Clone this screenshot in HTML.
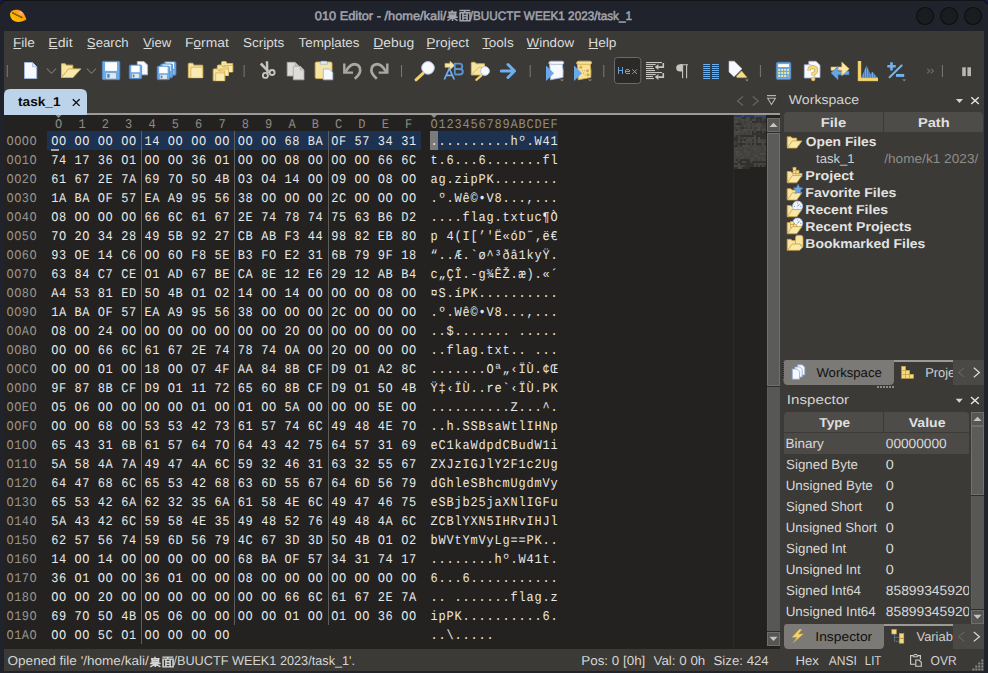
<!DOCTYPE html>
<html><head><meta charset="utf-8"><title>010 Editor</title>
<style>html,body{margin:0;padding:0;background:#20222c;overflow:hidden;width:988px;height:673px;font-family:"Liberation Sans",sans-serif}svg{display:block}</style>
</head><body>
<svg width="988" height="673" viewBox="0 0 988 673" text-rendering="geometricPrecision"><defs><clipPath id="clipP"><rect x="894" y="355" width="59" height="35"/></clipPath><clipPath id="clipI"><rect x="784" y="412" width="185" height="212"/></clipPath><clipPath id="clipV"><rect x="884" y="620" width="69" height="35"/></clipPath></defs><rect x="0" y="0" width="988" height="673" fill="#20222c"/>
<rect x="0" y="0" width="988" height="1" fill="#121317"/>
<path d="M0 0 H4.5 L0 4.5 Z" fill="#1b1a44"/>
<path d="M0.3 4.2 L4.2 0.3" stroke="#111216" stroke-width="1.2"/>
<path d="M988 0 H983.5 L988 4.5 Z" fill="#1b1a44"/>
<path d="M987.7 4.2 L983.8 0.3" stroke="#111216" stroke-width="1.2"/>
<defs><linearGradient id="lem" x1="0" y1="1" x2="1" y2="0"><stop offset="0" stop-color="#ffd000"/><stop offset="0.6" stop-color="#ffa000"/><stop offset="1" stop-color="#ff7a10"/></linearGradient></defs>
<defs><radialGradient id="lemh" cx="0.7" cy="0.25" r="0.5"><stop offset="0" stop-color="#ffc090" stop-opacity="0.9"/><stop offset="1" stop-color="#ff9020" stop-opacity="0"/></radialGradient></defs>
<path d="M10 13.5 C11 9.5 17 8.5 21 11 C24 13 25.5 16.5 26.3 19.5 C22 22.5 15 23 12 19.5 C10.5 17.5 10 15.5 10 13.5Z" fill="url(#lem)"/>
<path d="M10 13.5 C11 9.5 17 8.5 21 11 C24 13 25.5 16.5 26.3 19.5 C22 22.5 15 23 12 19.5 C10.5 17.5 10 15.5 10 13.5Z" fill="url(#lemh)"/>
<path d="M12.2 12.6 L22.3 17.6" stroke="#4a3000" stroke-width="1.6"/>
<path d="M12.8 12.7 L21.5 17.1" stroke="#e0c000" stroke-width="0.5"/>
<text x="314.78" y="19.50" font-family="Liberation Sans" font-size="12.30" fill="#a3a5ad" textLength="131.62" lengthAdjust="spacingAndGlyphs" stroke="#a3a5ad" stroke-width="0.5">010 Editor - /home/kali/</text>
<g transform="translate(446.90 9.90) scale(1.120 1.100)" stroke="#a3a5ad" stroke-width="1.40" fill="none">
<path d="M4.7 0.3 v1.8 M1.2 2.1 h7.6 M2.2 2.1 v3.2 h5.6 v-3.2 M2.2 3.7 h5.6 M0.3 6.6 h9.4 M5 5.3 v4.7 M4.6 7.1 l-4.1 2.6 M5.4 7.1 l4.1 2.6"/>
<path d="M11.2 0.6 h9.6 M15.9 0.6 v1.7 M11.8 2.5 h8.8 v7.3 h-8.8 Z M14.3 2.5 v7.3 M18 2.5 v7.3 M14.3 5 h3.7 M14.3 7.4 h3.7"/>
</g>
<text x="469.80" y="19.50" font-family="Liberation Sans" font-size="12.30" fill="#a3a5ad" textLength="162.19" lengthAdjust="spacingAndGlyphs" stroke="#a3a5ad" stroke-width="0.5">/BUUCTF WEEK1 2023/task_1</text>
<circle cx="925" cy="16" r="8.5" fill="#1b1c20" stroke="#0f1013" stroke-width="1.2"/>
<circle cx="949" cy="16" r="8.5" fill="#1b1c20" stroke="#0f1013" stroke-width="1.2"/>
<circle cx="973" cy="16" r="8.5" fill="#1b1c20" stroke="#0f1013" stroke-width="1.2"/>
<rect x="4" y="31" width="980" height="640" fill="#3b3a36"/>
<text x="12.94" y="47.10" font-family="Liberation Sans" font-size="12.90" fill="#dcdcdc" textLength="21.99" lengthAdjust="spacingAndGlyphs">File</text>
<rect x="13.4" y="48" width="7.8" height="1" fill="#dcdcdc"/>
<text x="48.31" y="47.10" font-family="Liberation Sans" font-size="12.90" fill="#dcdcdc" textLength="24.26" lengthAdjust="spacingAndGlyphs">Edit</text>
<rect x="48.8" y="48" width="8.9" height="1" fill="#dcdcdc"/>
<text x="86.86" y="47.10" font-family="Liberation Sans" font-size="12.90" fill="#dcdcdc" textLength="41.85" lengthAdjust="spacingAndGlyphs">Search</text>
<rect x="87.4" y="48" width="8.3" height="1" fill="#dcdcdc"/>
<text x="143.00" y="47.10" font-family="Liberation Sans" font-size="12.90" fill="#dcdcdc" textLength="28.22" lengthAdjust="spacingAndGlyphs">View</text>
<rect x="143.5" y="48" width="8.3" height="1" fill="#dcdcdc"/>
<text x="184.92" y="47.10" font-family="Liberation Sans" font-size="12.90" fill="#dcdcdc" textLength="43.90" lengthAdjust="spacingAndGlyphs">Format</text>
<rect x="193.9" y="48" width="7.2" height="1" fill="#dcdcdc"/>
<text x="243.14" y="47.10" font-family="Liberation Sans" font-size="12.90" fill="#dcdcdc" textLength="41.25" lengthAdjust="spacingAndGlyphs">Scripts</text>
<rect x="263.9" y="48" width="2.5" height="1" fill="#dcdcdc"/>
<text x="298.64" y="47.10" font-family="Liberation Sans" font-size="12.90" fill="#dcdcdc" textLength="60.80" lengthAdjust="spacingAndGlyphs">Templates</text>
<rect x="331.8" y="48" width="2.5" height="1" fill="#dcdcdc"/>
<text x="373.22" y="47.10" font-family="Liberation Sans" font-size="12.90" fill="#dcdcdc" textLength="40.96" lengthAdjust="spacingAndGlyphs">Debug</text>
<rect x="373.7" y="48" width="9.5" height="1" fill="#dcdcdc"/>
<text x="426.34" y="47.10" font-family="Liberation Sans" font-size="12.90" fill="#dcdcdc" textLength="42.64" lengthAdjust="spacingAndGlyphs">Project</text>
<rect x="426.8" y="48" width="8.6" height="1" fill="#dcdcdc"/>
<text x="482.04" y="47.10" font-family="Liberation Sans" font-size="12.90" fill="#dcdcdc" textLength="31.62" lengthAdjust="spacingAndGlyphs">Tools</text>
<rect x="482.5" y="48" width="7.8" height="1" fill="#dcdcdc"/>
<text x="526.60" y="47.10" font-family="Liberation Sans" font-size="12.90" fill="#dcdcdc" textLength="47.42" lengthAdjust="spacingAndGlyphs">Window</text>
<rect x="527.1" y="48" width="12.1" height="1" fill="#dcdcdc"/>
<text x="588.24" y="47.10" font-family="Liberation Sans" font-size="12.90" fill="#dcdcdc" textLength="28.18" lengthAdjust="spacingAndGlyphs">Help</text>
<rect x="588.7" y="48" width="9.4" height="1" fill="#dcdcdc"/>
<rect x="6.8" y="65" width="1" height="12" fill="#7a7975"/>
<rect x="243.6" y="65" width="1" height="12" fill="#7a7975"/>
<rect x="401.0" y="65" width="1" height="12" fill="#7a7975"/>
<rect x="529.7" y="65" width="1" height="12" fill="#7a7975"/>
<rect x="603.3" y="65" width="1" height="12" fill="#7a7975"/>
<rect x="759.9" y="65" width="1" height="12" fill="#7a7975"/>
<rect x="941.9" y="65" width="1" height="12" fill="#7a7975"/>
<path d="M24.5 62.5 H32.5 L36.7 66.7 V78.5 H24.5 Z" fill="#f7f9ff" stroke="#a2b6da" stroke-width="1"/>
<path d="M32.5 62.5 V66.7 H36.7" fill="#dfe6f3" stroke="#a2b6da" stroke-width="0.8"/>
<path d="M46.9 68.6 L51.5 73.3 L56.1 68.6" stroke="#78776f" stroke-width="1.1" fill="none"/>
<g transform="translate(61.00 63.00) scale(1.000)">
<path d="M0.5 14.5 V0.8 H4.3 L5.3 2.2 H11.8 V5.9 H7.6 Z" fill="#f6e4a0" stroke="#d8b458" stroke-width="1" stroke-linejoin="round"/>
<path d="M0.5 14.5 L7.6 5.9 H19.8 L12 14.5 Z" fill="#f8e9ab" stroke="#d8b458" stroke-width="1" stroke-linejoin="round"/>
</g>
<path d="M86.9 68.6 L91.5 73.3 L96.1 68.6" stroke="#78776f" stroke-width="1.1" fill="none"/>
<rect x="102.30" y="61.30" width="17.50" height="18.40" rx="1.2" fill="#6eaae6" stroke="#4d86c8" stroke-width="0.8"/>
<rect x="105.10" y="62.22" width="11.90" height="8.65" fill="#ffffff"/>
<rect x="106.15" y="73.08" width="9.80" height="5.52" fill="#e6e6e4"/>
<rect x="107.20" y="74.00" width="2.45" height="3.68" fill="#4d86c8"/>
<path d="M137.3 61.5 H144 L147.6 65.1 V74.8 H137.3 Z" fill="#f7f9ff" stroke="#a2b6da" stroke-width="0.9"/>
<rect x="129.30" y="65.00" width="12.30" height="13.80" rx="1.2" fill="#6eaae6" stroke="#4d86c8" stroke-width="0.8"/>
<rect x="131.27" y="65.69" width="8.36" height="6.49" fill="#ffffff"/>
<rect x="132.01" y="73.83" width="6.89" height="4.14" fill="#e6e6e4"/>
<rect x="132.74" y="74.52" width="1.72" height="2.76" fill="#4d86c8"/>
<rect x="164.00" y="61.70" width="12.00" height="13.60" rx="1.2" fill="#6eaae6" stroke="#4d86c8" stroke-width="0.8"/>
<rect x="165.92" y="62.38" width="8.16" height="6.39" fill="#ffffff"/>
<rect x="166.64" y="70.40" width="6.72" height="4.08" fill="#e6e6e4"/>
<rect x="167.36" y="71.08" width="1.68" height="2.72" fill="#4d86c8"/>
<rect x="160.60" y="63.90" width="12.00" height="13.80" rx="1.2" fill="#6eaae6" stroke="#4d86c8" stroke-width="0.8"/>
<rect x="162.52" y="64.59" width="8.16" height="6.49" fill="#ffffff"/>
<rect x="163.24" y="72.73" width="6.72" height="4.14" fill="#e6e6e4"/>
<rect x="163.96" y="73.42" width="1.68" height="2.76" fill="#4d86c8"/>
<rect x="157.20" y="66.10" width="12.40" height="13.60" rx="1.2" fill="#6eaae6" stroke="#4d86c8" stroke-width="0.8"/>
<rect x="159.18" y="66.78" width="8.43" height="6.39" fill="#ffffff"/>
<rect x="159.93" y="74.80" width="6.94" height="4.08" fill="#e6e6e4"/>
<rect x="160.67" y="75.48" width="1.74" height="2.72" fill="#4d86c8"/>
<path d="M188.30 77.70 V64.20 Q188.30 63.20 189.30 63.20 H192.80 L193.80 65.20 H202.70 V77.70 Z" fill="#f6e4a0" stroke="#d8b458" stroke-width="0.9"/>
<path d="M190.80 77.70 V67.20 H202.70 V77.70" fill="#f8eab0" stroke="#d8b458" stroke-width="0.9"/>
<path d="M221.50 72.00 V62.50 Q221.50 61.50 222.50 61.50 H226.00 L227.00 63.50 H232.70 V72.00 Z" fill="#f6e4a0" stroke="#d8b458" stroke-width="0.9"/>
<path d="M224.00 72.00 V65.50 H232.70 V72.00" fill="#f8eab0" stroke="#d8b458" stroke-width="0.9"/>
<path d="M217.30 75.50 V66.00 Q217.30 65.00 218.30 65.00 H221.80 L222.80 67.00 H228.50 V75.50 Z" fill="#f6e4a0" stroke="#d8b458" stroke-width="0.9"/>
<path d="M219.80 75.50 V69.00 H228.50 V75.50" fill="#f8eab0" stroke="#d8b458" stroke-width="0.9"/>
<path d="M213.20 80.70 V69.90 Q213.20 68.90 214.20 68.90 H217.70 L218.70 70.90 H224.70 V80.70 Z" fill="#f6e4a0" stroke="#d8b458" stroke-width="0.9"/>
<path d="M215.70 80.70 V72.90 H224.70 V80.70" fill="#f8eab0" stroke="#d8b458" stroke-width="0.9"/>
<path d="M259.8 64.6 L261.8 62.6 L269.3 70.8 L267.6 72.6 Z" fill="#c6c5c0"/>
<path d="M265.6 61.2 H268.2 L268.4 71.2 L266.4 72.4 Z" fill="#c6c5c0"/>
<g stroke="#c6c5c0" fill="none"><circle cx="265.4" cy="75.4" r="2.5" stroke-width="1.9"/><circle cx="272.1" cy="72.5" r="2.5" stroke-width="1.9"/></g>
<path d="M267.2 72.8 L269.8 72" stroke="#c6c5c0" stroke-width="1.6"/>
<path d="M287.2 62.3 H295 L298.8 66.1 V76 H287.2 Z" fill="#dddcd8" stroke="#a9a8a3" stroke-width="0.8"/>
<path d="M295 62.3 V66.1 H298.8" fill="#c4c3bf" stroke="#a9a8a3" stroke-width="0.6"/>
<path d="M293.3 66.3 H300.3 L304 70 V79.8 H293.3 Z" fill="#dddcd8" stroke="#a9a8a3" stroke-width="0.8"/>
<path d="M300.3 66.3 V70 H304" fill="#c4c3bf" stroke="#a9a8a3" stroke-width="0.6"/>
<rect x="315.2" y="62" width="16.8" height="16.6" rx="1.5" fill="#f6e4a0" stroke="#d8b458" stroke-width="0.9"/>
<path d="M320 64.2 L321 61.3 H326.6 L327.6 64.2 Z" fill="#e8eef8" stroke="#9fb3d6" stroke-width="0.8"/>
<path d="M323.3 69 H329.2 L332.8 72.6 V79.8 H323.3 Z" fill="#f7f9ff" stroke="#a2b6da" stroke-width="0.9"/>
<g stroke="#a9a8a3" fill="none">
<path d="M344.3 63.5 V72.6 H353" stroke-width="2.4"/>
<path d="M345.6 71.6 Q350 64.2 354.5 64.2 Q360.3 64.6 360.2 70.6 Q360 74 354.8 78.8" stroke-width="2.7"/>
<path d="M387.3 63.5 V72.6 H378.6" stroke-width="2.4"/>
<path d="M386 71.6 Q381.6 64.2 377.1 64.2 Q371.3 64.6 371.4 70.6 Q371.6 74 376.8 78.8" stroke-width="2.7"/>
</g>
<path d="M416 79.8 L423 73.3" stroke="#f2d068" stroke-width="3" stroke-linecap="round"/>
<circle cx="428" cy="67.9" r="6.3" fill="#f7f9ff" stroke="#b8c8e6" stroke-width="1"/>
<path d="M445 63.4 H450 V61.2 L454.8 65.4 L450 69.6 V67.3 H445 Z" fill="#f8e7a6" stroke="#d8b458" stroke-width="0.7"/>
<path d="M454.8 74.5 V63.6 H459.5 Q462.3 63.6 462.3 66.4 Q462.3 69 459.5 69 H454.8 M459.5 69 Q462.9 69 462.9 71.8 Q462.9 74.5 459.5 74.5 H454.8" fill="none" stroke="#5b92cf" stroke-width="1.8"/>
<path d="M444.3 79.5 L449.3 68.5 L454.3 79.5 M446.3 75.3 H452.3" fill="none" stroke="#70b0f0" stroke-width="1.7"/>
<path d="M471.3 75 V63 Q471.3 62.3 472 62.3 H475 L476 63.8 H484.5 V75 Z" fill="#f6e4a0" stroke="#d8b458" stroke-width="0.9"/>
<path d="M471.8 74.5 L478.5 67.3 H484.5" fill="none" stroke="#d8b458" stroke-width="0.8"/>
<path d="M476.3 79.8 L481.3 75.6" stroke="#f2d068" stroke-width="2.2" stroke-linecap="round"/>
<circle cx="485" cy="71" r="4.4" fill="#f7f9ff" stroke="#b8c8e6" stroke-width="1"/>
<path d="M501.3 71 H513 M508 64.5 L514.5 71 L508 77.5" fill="none" stroke="#6cb0ee" stroke-width="3" stroke-linecap="round" stroke-linejoin="round"/>
<path d="M548.8 62.9 Q549.0 61.2 551.0 61.2 H562.0 Q564.2 61.3 563.8 62.9 Q563.4 64.4 562.4 64.5 Q563.6 70.5 563.0 77.4 L550.4 79.8 Q550.4 72 549.6 64.6 Q548.8 64.2 548.8 62.9 Z" fill="#f7f9ff" stroke="#9fb2d8" stroke-width="0.9" stroke-linejoin="round"/>
<path d="M550.8 64.3 H562.4 M549.9 63.2 Q550.2 64.3 551.0 64.3" fill="none" stroke="#9fb2d8" stroke-width="0.9"/>
<path d="M546 65.6 L554 73.2 L546 80.9 Z" fill="#6aa8e8"/>
<path d="M560 79.4 h4 l-2 1.8 z" fill="#8c8b86"/>
<path d="M576.6 62.9 Q576.8 61.2 578.8 61.2 H589.8 Q592.0 61.3 591.6 62.9 Q591.2 64.4 590.2 64.5 Q591.4 70.5 590.8 77.4 L578.2 79.8 Q578.2 72 577.4 64.6 Q576.6 64.2 576.6 62.9 Z" fill="#f6e29a" stroke="#d3ab4c" stroke-width="0.9" stroke-linejoin="round"/>
<path d="M578.6 64.3 H590.2 M577.7 63.2 Q578.0 64.3 578.8 64.3" fill="none" stroke="#d3ab4c" stroke-width="0.9"/>
<circle cx="580.8" cy="67.2" r="1.5" fill="#d4a94a"/>
<circle cx="587.5" cy="70.8" r="1.5" fill="#d4a94a"/>
<circle cx="588.0" cy="74.8" r="1.5" fill="#d4a94a"/>
<circle cx="582.5" cy="70.6" r="0.6" fill="#d4a94a"/>
<circle cx="584.6" cy="70.6" r="0.6" fill="#d4a94a"/>
<circle cx="583.6" cy="73.2" r="0.6" fill="#d4a94a"/>
<circle cx="585.3" cy="74.8" r="0.6" fill="#d4a94a"/>
<path d="M574 65.6 L582 73.2 L574 80.9 Z" fill="#6aa8e8"/>
<path d="M588 79.4 h4 l-2 1.8 z" fill="#8c8b86"/>
<rect x="614.5" y="57.5" width="26.3" height="26" rx="3" fill="#2b2a28" stroke="#6c6b67" stroke-width="1"/>
<g fill="#68a2da"><rect x="618" y="67" width="1" height="7"/><rect x="622" y="67" width="1" height="7"/><rect x="618" y="70" width="5" height="1"/>
<rect x="626" y="69" width="3" height="1"/><rect x="625" y="70" width="1" height="3"/><rect x="629" y="70" width="1" height="1.5"/><rect x="625" y="71" width="5" height="1"/><rect x="626" y="73" width="4" height="1"/></g>
<path d="M632.3 69.3 L637 74 M637 69.3 L632.3 74" stroke="#68a2da" stroke-width="1"/>
<g fill="#c6c5c0">
<rect x="646" y="62" width="16.0" height="1.1"/>
<rect x="646" y="64" width="9.7" height="1.1"/>
<rect x="646" y="66" width="7.0" height="1.1"/>
<rect x="646" y="68" width="8.0" height="1.1"/>
<rect x="646" y="70" width="9.0" height="1.1"/>
<rect x="646" y="72" width="16.0" height="1.1"/>
<rect x="646" y="74" width="9.7" height="1.1"/>
<rect x="646" y="76" width="7.0" height="1.1"/>
<rect x="646" y="78" width="8.0" height="1.1"/>
</g>
<path d="M662.5 63.0 H664.1 V67.9 H658.2 V66.3 H662.5 Z" fill="#c6c5c0"/>
<path d="M654.8 67.1 L658.4 64.1 V70.1 Z" fill="#c6c5c0"/>
<path d="M662.5 73.0 H664.1 V77.9 H658.2 V76.3 H662.5 Z" fill="#c6c5c0"/>
<path d="M654.8 77.1 L658.4 74.1 V80.1 Z" fill="#c6c5c0"/>
<path d="M682.2 64.3 H680.3 Q676.2 64.5 676.2 67.9 Q676.2 71.4 680.3 71.5 H682.2 Z" fill="#c6c5c0"/>
<path d="M680 64.8 H688 M682.6 64.3 V78.2 M686.6 64.3 V78.2" fill="none" stroke="#c6c5c0" stroke-width="1.1"/>
<g fill="#6eb0ee">
<rect x="703.2" y="64.00" width="6.9" height="1"/><rect x="712" y="64.00" width="7" height="1"/>
<rect x="703.2" y="66.00" width="6.9" height="1"/><rect x="712" y="66.00" width="7" height="1"/>
<rect x="703.2" y="68.00" width="6.9" height="1"/><rect x="712" y="68.00" width="7" height="1"/>
<rect x="703.2" y="70.00" width="6.9" height="1"/><rect x="712" y="70.00" width="7" height="1"/>
<rect x="703.2" y="72.00" width="6.9" height="1"/><rect x="712" y="72.00" width="7" height="1"/>
<rect x="703.2" y="74.00" width="6.9" height="1"/><rect x="712" y="74.00" width="7" height="1"/>
<rect x="703.2" y="76.00" width="6.9" height="1"/><rect x="712" y="76.00" width="7" height="1"/>
<rect x="703.2" y="78.00" width="6.9" height="1"/><rect x="712" y="78.00" width="7" height="1"/>
</g>
<path d="M729 61.2 H734.3 L742 68.8 L734 76.7 L729 72 Z" fill="#f7f9ff" stroke="#b9c6de" stroke-width="0.6"/>
<path d="M736.5 76.3 L741.6 71 L747 77.6 H737 Z" fill="#f5db8a" stroke="#d8b458" stroke-width="0.6"/>
<path d="M745 79.4 h4 l-2 1.8 z" fill="#8c8b86"/>
<rect x="776.3" y="62.2" width="14.6" height="17.4" rx="1.6" fill="#6aa6e4" stroke="#4f86c6" stroke-width="0.6"/>
<rect x="778.2" y="64.1" width="10.8" height="2.9" fill="#ffffff"/>
<rect x="778.2" y="68.9" width="2" height="2" fill="#f4e490"/>
<rect x="781.2" y="68.9" width="2" height="2" fill="#f4e490"/>
<rect x="784.1" y="68.9" width="2" height="2" fill="#f4e490"/>
<rect x="787.1" y="68.9" width="2" height="2" fill="#f4e490"/>
<rect x="778.2" y="72.0" width="2" height="2" fill="#f4e490"/>
<rect x="781.2" y="72.0" width="2" height="2" fill="#f4e490"/>
<rect x="784.1" y="72.0" width="2" height="2" fill="#f4e490"/>
<rect x="787.1" y="72.0" width="2" height="2" fill="#f4e490"/>
<rect x="778.2" y="75.0" width="2" height="2" fill="#f4e490"/>
<rect x="781.2" y="75.0" width="2" height="2" fill="#f4e490"/>
<rect x="784.1" y="75.0" width="2" height="2" fill="#f4e490"/>
<rect x="787.1" y="75.0" width="2" height="2" fill="#c8b070"/>
<path d="M808.8 61.3 H816 L820 65.3 V77.5 H808.8 Z" fill="#f7f9ff" stroke="#a2b6da" stroke-width="0.8"/>
<path d="M804.3 64.8 H811.3 L814.8 68.3 V78 H804.3 Z" fill="#f7f9ff" stroke="#a2b6da" stroke-width="0.8"/>
<path d="M809.2 70.6 Q809 67.2 812.6 67.1 Q816.6 67.1 816.4 70.3 Q816.2 72.6 813.2 73.8 V75.6" fill="none" stroke="#c9a448" stroke-width="3.6"/>
<path d="M809.2 70.6 Q809 67.2 812.6 67.1 Q816.6 67.1 816.4 70.3 Q816.2 72.6 813.2 73.8 V75.6" fill="none" stroke="#f6dc80" stroke-width="2.4"/>
<circle cx="813.2" cy="79" r="1.9" fill="#f6dc80" stroke="#c9a448" stroke-width="0.6"/>
<path d="M831 67 H842.5 V70.4 H831 Z" fill="#f8e7a6" stroke="#d8b458" stroke-width="0.6"/>
<path d="M849 71.3 H838 V66.3 L831 73 L838 79.7 V74.7 H849 Z" fill="#6aa6e4" stroke="#4d86c8" stroke-width="0.6"/>
<path d="M841.8 67 V62 L849.2 68.8 L841.8 75.7 V70.4" fill="#f8e7a6" stroke="#d8b458" stroke-width="0.6"/>
<defs><clipPath id="histc"><path d="M861.2 77.9 L866.5 65.6 L870.4 74.3 L872.3 71.8 L877.6 77.9 Z"/></clipPath></defs>
<g clip-path="url(#histc)"><rect x="861" y="65" width="17" height="13" fill="#6eaae6"/>
<rect x="862.6" y="65" width="0.6" height="13" fill="#3a5f90"/>
<rect x="864.4" y="65" width="0.6" height="13" fill="#3a5f90"/>
<rect x="866.1" y="65" width="0.6" height="13" fill="#3a5f90"/>
<rect x="867.9" y="65" width="0.6" height="13" fill="#3a5f90"/>
<rect x="869.6" y="65" width="0.6" height="13" fill="#3a5f90"/>
<rect x="871.4" y="65" width="0.6" height="13" fill="#3a5f90"/>
<rect x="873.1" y="65" width="0.6" height="13" fill="#3a5f90"/>
<rect x="874.9" y="65" width="0.6" height="13" fill="#3a5f90"/>
<rect x="876.6" y="65" width="0.6" height="13" fill="#3a5f90"/>
</g>
<path d="M859.5 61 V79.4 H878" fill="none" stroke="#f3d472" stroke-width="3"/>
<path d="M858 61 V80.9 H878 M861 61 V77.9 H878" fill="none" stroke="#d8b458" stroke-width="0.5"/>
<path d="M887.3 66.3 H895.7 M891.5 62.2 V70.5" stroke="#70b2f0" stroke-width="2.6"/>
<path d="M889.6 77.2 L901.6 65.4" stroke="#70b2f0" stroke-width="2.1" stroke-linecap="round"/>
<rect x="896" y="74" width="8.2" height="2.9" fill="#70b2f0"/>
<path d="M902.2 79.4 h4 l-2 1.8 z" fill="#8c8b86"/>
<path d="M927.2 68.6 L929.7 71 L927.2 73.4 M930.9 68.6 L933.4 71 L930.9 73.4" fill="none" stroke="#6a6965" stroke-width="1.2"/>
<rect x="962.2" y="67.3" width="3.6" height="8.8" fill="#b8b7b2"/><rect x="967.4" y="67.3" width="3.6" height="8.8" fill="#b8b7b2"/>
<path d="M4 115 V95 Q4 89 10 89 H81 Q87 89 87 95 V115 Z" fill="#bcd3ea"/>
<text x="18.07" y="105.90" font-family="Liberation Sans" font-weight="bold" font-size="12.90" fill="#0a0a0a" textLength="42.49" lengthAdjust="spacingAndGlyphs">task_1</text>
<path d="M72.8 99.3 L79.6 105.9 M79.6 99.3 L72.8 105.9" stroke="#0a0a0a" stroke-width="1.3"/>
<path d="M743 96.5 L737.5 101 L743 105.5" stroke="#6a6965" stroke-width="1.1" fill="none"/>
<path d="M752.8 96.5 L758.3 101 L752.8 105.5" stroke="#6a6965" stroke-width="1.1" fill="none"/>
<rect x="767" y="95" width="9" height="1.2" fill="#b5b4b0"/>
<path d="M767.6 98.3 L771.5 104.5 L775.4 98.3 Z" stroke="#b5b4b0" stroke-width="1.1" fill="none"/>
<rect x="87" y="113" width="693" height="2" fill="#9b9a97"/>
<rect x="4" y="115" width="776" height="534" fill="#232220"/>
<rect x="47" y="131" width="374" height="19" fill="#1d3150"/>
<rect x="430" y="131" width="128" height="19" fill="#1d3150"/>
<rect x="430" y="131" width="8" height="19" fill="#7b7b7b"/>
<rect x="51" y="149" width="8" height="2" fill="#a7a7a7"/>
<path d="M55.5 115 h6 l-3 3 z" fill="#8a8a8a"/>
<path d="M431 115 h6 l-3 3 z" fill="#8a8a8a"/>
<text transform="scale(0.900 1)" x="61.21 87.13 113.05 138.97 164.89 190.82 216.74 242.66 268.58 294.51 320.43 346.35 372.27 398.19 424.12 450.04" y="127.80" font-family="Liberation Mono" font-size="13.30" fill="#8f8a83">O123456789ABCDEF</text>
<text transform="scale(0.900 1)" x="478.44 487.33 496.22 505.11 514.00 522.89 531.78 540.67 549.56 558.44 567.33 576.22 585.11 594.00 602.89 611.78" y="127.80" font-family="Liberation Mono" font-size="13.30" fill="#8f8a83">O123456789ABCDEF</text>
<rect x="141" y="131.0" width="1" height="19" fill="#5f5e5b"/>
<rect x="234" y="131.0" width="1" height="19" fill="#5f5e5b"/>
<rect x="328" y="131.0" width="1" height="19" fill="#5f5e5b"/>
<rect x="141" y="150.0" width="1" height="19" fill="#5f5e5b"/>
<rect x="234" y="150.0" width="1" height="19" fill="#5f5e5b"/>
<rect x="328" y="150.0" width="1" height="19" fill="#5f5e5b"/>
<rect x="141" y="169.0" width="1" height="19" fill="#5f5e5b"/>
<rect x="234" y="169.0" width="1" height="19" fill="#5f5e5b"/>
<rect x="328" y="169.0" width="1" height="19" fill="#5f5e5b"/>
<rect x="141" y="188.0" width="1" height="19" fill="#5f5e5b"/>
<rect x="234" y="188.0" width="1" height="19" fill="#5f5e5b"/>
<rect x="328" y="188.0" width="1" height="19" fill="#5f5e5b"/>
<rect x="141" y="207.0" width="1" height="19" fill="#5f5e5b"/>
<rect x="234" y="207.0" width="1" height="19" fill="#5f5e5b"/>
<rect x="328" y="207.0" width="1" height="19" fill="#5f5e5b"/>
<rect x="141" y="226.0" width="1" height="19" fill="#5f5e5b"/>
<rect x="234" y="226.0" width="1" height="19" fill="#5f5e5b"/>
<rect x="328" y="226.0" width="1" height="19" fill="#5f5e5b"/>
<rect x="141" y="245.0" width="1" height="19" fill="#5f5e5b"/>
<rect x="234" y="245.0" width="1" height="19" fill="#5f5e5b"/>
<rect x="328" y="245.0" width="1" height="19" fill="#5f5e5b"/>
<rect x="141" y="264.0" width="1" height="19" fill="#5f5e5b"/>
<rect x="234" y="264.0" width="1" height="19" fill="#5f5e5b"/>
<rect x="328" y="264.0" width="1" height="19" fill="#5f5e5b"/>
<rect x="141" y="283.0" width="1" height="19" fill="#5f5e5b"/>
<rect x="234" y="283.0" width="1" height="19" fill="#5f5e5b"/>
<rect x="328" y="283.0" width="1" height="19" fill="#5f5e5b"/>
<rect x="141" y="302.0" width="1" height="19" fill="#5f5e5b"/>
<rect x="234" y="302.0" width="1" height="19" fill="#5f5e5b"/>
<rect x="328" y="302.0" width="1" height="19" fill="#5f5e5b"/>
<rect x="141" y="321.0" width="1" height="19" fill="#5f5e5b"/>
<rect x="234" y="321.0" width="1" height="19" fill="#5f5e5b"/>
<rect x="328" y="321.0" width="1" height="19" fill="#5f5e5b"/>
<rect x="141" y="340.0" width="1" height="19" fill="#5f5e5b"/>
<rect x="234" y="340.0" width="1" height="19" fill="#5f5e5b"/>
<rect x="328" y="340.0" width="1" height="19" fill="#5f5e5b"/>
<rect x="141" y="359.0" width="1" height="19" fill="#5f5e5b"/>
<rect x="234" y="359.0" width="1" height="19" fill="#5f5e5b"/>
<rect x="328" y="359.0" width="1" height="19" fill="#5f5e5b"/>
<rect x="141" y="378.0" width="1" height="19" fill="#5f5e5b"/>
<rect x="234" y="378.0" width="1" height="19" fill="#5f5e5b"/>
<rect x="328" y="378.0" width="1" height="19" fill="#5f5e5b"/>
<rect x="141" y="397.0" width="1" height="19" fill="#5f5e5b"/>
<rect x="234" y="397.0" width="1" height="19" fill="#5f5e5b"/>
<rect x="328" y="397.0" width="1" height="19" fill="#5f5e5b"/>
<rect x="141" y="416.0" width="1" height="19" fill="#5f5e5b"/>
<rect x="234" y="416.0" width="1" height="19" fill="#5f5e5b"/>
<rect x="328" y="416.0" width="1" height="19" fill="#5f5e5b"/>
<rect x="141" y="435.0" width="1" height="19" fill="#5f5e5b"/>
<rect x="234" y="435.0" width="1" height="19" fill="#5f5e5b"/>
<rect x="328" y="435.0" width="1" height="19" fill="#5f5e5b"/>
<rect x="141" y="454.0" width="1" height="19" fill="#5f5e5b"/>
<rect x="234" y="454.0" width="1" height="19" fill="#5f5e5b"/>
<rect x="328" y="454.0" width="1" height="19" fill="#5f5e5b"/>
<rect x="141" y="473.0" width="1" height="19" fill="#5f5e5b"/>
<rect x="234" y="473.0" width="1" height="19" fill="#5f5e5b"/>
<rect x="328" y="473.0" width="1" height="19" fill="#5f5e5b"/>
<rect x="141" y="492.0" width="1" height="19" fill="#5f5e5b"/>
<rect x="234" y="492.0" width="1" height="19" fill="#5f5e5b"/>
<rect x="328" y="492.0" width="1" height="19" fill="#5f5e5b"/>
<rect x="141" y="511.0" width="1" height="19" fill="#5f5e5b"/>
<rect x="234" y="511.0" width="1" height="19" fill="#5f5e5b"/>
<rect x="328" y="511.0" width="1" height="19" fill="#5f5e5b"/>
<rect x="141" y="530.0" width="1" height="19" fill="#5f5e5b"/>
<rect x="234" y="530.0" width="1" height="19" fill="#5f5e5b"/>
<rect x="328" y="530.0" width="1" height="19" fill="#5f5e5b"/>
<rect x="141" y="549.0" width="1" height="19" fill="#5f5e5b"/>
<rect x="234" y="549.0" width="1" height="19" fill="#5f5e5b"/>
<rect x="328" y="549.0" width="1" height="19" fill="#5f5e5b"/>
<rect x="141" y="568.0" width="1" height="19" fill="#5f5e5b"/>
<rect x="234" y="568.0" width="1" height="19" fill="#5f5e5b"/>
<rect x="328" y="568.0" width="1" height="19" fill="#5f5e5b"/>
<rect x="141" y="587.0" width="1" height="19" fill="#5f5e5b"/>
<rect x="234" y="587.0" width="1" height="19" fill="#5f5e5b"/>
<rect x="328" y="587.0" width="1" height="19" fill="#5f5e5b"/>
<rect x="141" y="606.0" width="1" height="19" fill="#5f5e5b"/>
<rect x="234" y="606.0" width="1" height="19" fill="#5f5e5b"/>
<rect x="328" y="606.0" width="1" height="19" fill="#5f5e5b"/>
<rect x="141" y="625.0" width="1" height="19" fill="#5f5e5b"/>
<text transform="scale(0.900 1)" x="7.33 15.78 24.22 32.67" y="144.90" font-family="Liberation Mono" font-size="13.30" fill="#9a948c">OOOO</text>
<text transform="scale(0.900 1)" x="56.89 65.52 82.81 91.44 108.73 117.37 134.66 143.29 160.58 169.21 186.50 195.13 212.42 221.06 238.34 246.98 264.27 272.90 290.19 298.82 316.11 324.74 342.03 350.67 367.96 376.59 393.88 402.51 419.80 428.43 445.72 454.36" y="144.90" font-family="Liberation Mono" font-size="13.30" fill="#e8e8e6">OOOOOOOO14OOOOOOOOOO68BAOF573431</text>
<text transform="scale(0.900 1)" x="478.44 487.33 496.22 505.11 514.00 522.89 531.78 540.67 549.56 558.44 567.33 576.22 585.11 594.00 602.89 611.78" y="144.90" font-family="Liberation Mono" font-size="13.30" fill="#e8e8e6">..........hº.W41</text>
<text transform="scale(0.900 1)" x="7.33 15.78 24.22 32.67" y="163.90" font-family="Liberation Mono" font-size="13.30" fill="#9a948c">OO1O</text>
<text transform="scale(0.900 1)" x="56.89 65.52 82.81 91.44 108.73 117.37 134.66 143.29 160.58 169.21 186.50 195.13 212.42 221.06 238.34 246.98 264.27 272.90 290.19 298.82 316.11 324.74 342.03 350.67 367.96 376.59 393.88 402.51 419.80 428.43 445.72 454.36" y="163.90" font-family="Liberation Mono" font-size="13.30" fill="#e8e8e6">741736O1OOOO36O1OOOOO8OOOOOO666C</text>
<text transform="scale(0.900 1)" x="478.44 487.33 496.22 505.11 514.00 522.89 531.78 540.67 549.56 558.44 567.33 576.22 585.11 594.00 602.89 611.78" y="163.90" font-family="Liberation Mono" font-size="13.30" fill="#e8e8e6">t.6...6.......fl</text>
<text transform="scale(0.900 1)" x="7.33 15.78 24.22 32.67" y="182.90" font-family="Liberation Mono" font-size="13.30" fill="#9a948c">OO2O</text>
<text transform="scale(0.900 1)" x="56.89 65.52 82.81 91.44 108.73 117.37 134.66 143.29 160.58 169.21 186.50 195.13 212.42 221.06 238.34 246.98 264.27 272.90 290.19 298.82 316.11 324.74 342.03 350.67 367.96 376.59 393.88 402.51 419.80 428.43 445.72 454.36" y="182.90" font-family="Liberation Mono" font-size="13.30" fill="#e8e8e6">61672E7A697O5O4BO3O414OOO9OOO8OO</text>
<text transform="scale(0.900 1)" x="478.44 487.33 496.22 505.11 514.00 522.89 531.78 540.67 549.56 558.44 567.33 576.22 585.11 594.00 602.89 611.78" y="182.90" font-family="Liberation Mono" font-size="13.30" fill="#e8e8e6">ag.zipPK........</text>
<text transform="scale(0.900 1)" x="7.33 15.78 24.22 32.67" y="201.90" font-family="Liberation Mono" font-size="13.30" fill="#9a948c">OO3O</text>
<text transform="scale(0.900 1)" x="56.89 65.52 82.81 91.44 108.73 117.37 134.66 143.29 160.58 169.21 186.50 195.13 212.42 221.06 238.34 246.98 264.27 272.90 290.19 298.82 316.11 324.74 342.03 350.67 367.96 376.59 393.88 402.51 419.80 428.43 445.72 454.36" y="201.90" font-family="Liberation Mono" font-size="13.30" fill="#e8e8e6">1ABAOF57EAA9955638OOOOOO2COOOOOO</text>
<text transform="scale(0.900 1)" x="478.44 487.33 496.22 505.11 514.00 522.89 531.78 540.67 549.56 558.44 567.33 576.22 585.11 594.00 602.89 611.78" y="201.90" font-family="Liberation Mono" font-size="13.30" fill="#e8e8e6">.º.Wê©•V8...,...</text>
<text transform="scale(0.900 1)" x="7.33 15.78 24.22 32.67" y="220.90" font-family="Liberation Mono" font-size="13.30" fill="#9a948c">OO4O</text>
<text transform="scale(0.900 1)" x="56.89 65.52 82.81 91.44 108.73 117.37 134.66 143.29 160.58 169.21 186.50 195.13 212.42 221.06 238.34 246.98 264.27 272.90 290.19 298.82 316.11 324.74 342.03 350.67 367.96 376.59 393.88 402.51 419.80 428.43 445.72 454.36" y="220.90" font-family="Liberation Mono" font-size="13.30" fill="#e8e8e6">O8OOOOOO666C61672E7478747563B6D2</text>
<text transform="scale(0.900 1)" x="478.44 487.33 496.22 505.11 514.00 522.89 531.78 540.67 549.56 558.44 567.33 576.22 585.11 594.00 602.89 611.78" y="220.90" font-family="Liberation Mono" font-size="13.30" fill="#e8e8e6">....flag.txtuc¶Ò</text>
<text transform="scale(0.900 1)" x="7.33 15.78 24.22 32.67" y="239.90" font-family="Liberation Mono" font-size="13.30" fill="#9a948c">OO5O</text>
<text transform="scale(0.900 1)" x="56.89 65.52 82.81 91.44 108.73 117.37 134.66 143.29 160.58 169.21 186.50 195.13 212.42 221.06 238.34 246.98 264.27 272.90 290.19 298.82 316.11 324.74 342.03 350.67 367.96 376.59 393.88 402.51 419.80 428.43 445.72 454.36" y="239.90" font-family="Liberation Mono" font-size="13.30" fill="#e8e8e6">7O2O3428495B9227CBABF3449882EB8O</text>
<text transform="scale(0.900 1)" x="478.44 487.33 496.22 505.11 514.00 522.89 531.78 540.67 549.56 558.44 567.33 576.22 585.11 594.00 602.89 611.78" y="239.90" font-family="Liberation Mono" font-size="13.30" fill="#e8e8e6">p 4(I[’&#x27;Ë«óD˜‚ë€</text>
<text transform="scale(0.900 1)" x="7.33 15.78 24.22 32.67" y="258.90" font-family="Liberation Mono" font-size="13.30" fill="#9a948c">OO6O</text>
<text transform="scale(0.900 1)" x="56.89 65.52 82.81 91.44 108.73 117.37 134.66 143.29 160.58 169.21 186.50 195.13 212.42 221.06 238.34 246.98 264.27 272.90 290.19 298.82 316.11 324.74 342.03 350.67 367.96 376.59 393.88 402.51 419.80 428.43 445.72 454.36" y="258.90" font-family="Liberation Mono" font-size="13.30" fill="#e8e8e6">93OE14C6OO6OF85EB3FOE2316B799F18</text>
<text transform="scale(0.900 1)" x="478.44 487.33 496.22 505.11 514.00 522.89 531.78 540.67 549.56 558.44 567.33 576.22 585.11 594.00 602.89 611.78" y="258.90" font-family="Liberation Mono" font-size="13.30" fill="#e8e8e6">“..Æ.`ø^³ðâ1kyŸ.</text>
<text transform="scale(0.900 1)" x="7.33 15.78 24.22 32.67" y="277.90" font-family="Liberation Mono" font-size="13.30" fill="#9a948c">OO7O</text>
<text transform="scale(0.900 1)" x="56.89 65.52 82.81 91.44 108.73 117.37 134.66 143.29 160.58 169.21 186.50 195.13 212.42 221.06 238.34 246.98 264.27 272.90 290.19 298.82 316.11 324.74 342.03 350.67 367.96 376.59 393.88 402.51 419.80 428.43 445.72 454.36" y="277.90" font-family="Liberation Mono" font-size="13.30" fill="#e8e8e6">6384C7CEO1AD67BECA8E12E62912ABB4</text>
<text transform="scale(0.900 1)" x="478.44 487.33 496.22 505.11 514.00 522.89 531.78 540.67 549.56 558.44 567.33 576.22 585.11 594.00 602.89 611.78" y="277.90" font-family="Liberation Mono" font-size="13.30" fill="#e8e8e6">c„ÇÎ.-g¾ÊŽ.æ).«´</text>
<text transform="scale(0.900 1)" x="7.33 15.78 24.22 32.67" y="296.90" font-family="Liberation Mono" font-size="13.30" fill="#9a948c">OO8O</text>
<text transform="scale(0.900 1)" x="56.89 65.52 82.81 91.44 108.73 117.37 134.66 143.29 160.58 169.21 186.50 195.13 212.42 221.06 238.34 246.98 264.27 272.90 290.19 298.82 316.11 324.74 342.03 350.67 367.96 376.59 393.88 402.51 419.80 428.43 445.72 454.36" y="296.90" font-family="Liberation Mono" font-size="13.30" fill="#e8e8e6">A45381ED5O4BO1O214OO14OOOOOOO8OO</text>
<text transform="scale(0.900 1)" x="478.44 487.33 496.22 505.11 514.00 522.89 531.78 540.67 549.56 558.44 567.33 576.22 585.11 594.00 602.89 611.78" y="296.90" font-family="Liberation Mono" font-size="13.30" fill="#e8e8e6">¤S.íPK..........</text>
<text transform="scale(0.900 1)" x="7.33 15.78 24.22 32.67" y="315.90" font-family="Liberation Mono" font-size="13.30" fill="#9a948c">OO9O</text>
<text transform="scale(0.900 1)" x="56.89 65.52 82.81 91.44 108.73 117.37 134.66 143.29 160.58 169.21 186.50 195.13 212.42 221.06 238.34 246.98 264.27 272.90 290.19 298.82 316.11 324.74 342.03 350.67 367.96 376.59 393.88 402.51 419.80 428.43 445.72 454.36" y="315.90" font-family="Liberation Mono" font-size="13.30" fill="#e8e8e6">1ABAOF57EAA9955638OOOOOO2COOOOOO</text>
<text transform="scale(0.900 1)" x="478.44 487.33 496.22 505.11 514.00 522.89 531.78 540.67 549.56 558.44 567.33 576.22 585.11 594.00 602.89 611.78" y="315.90" font-family="Liberation Mono" font-size="13.30" fill="#e8e8e6">.º.Wê©•V8...,...</text>
<text transform="scale(0.900 1)" x="7.33 15.78 24.22 32.67" y="334.90" font-family="Liberation Mono" font-size="13.30" fill="#9a948c">OOAO</text>
<text transform="scale(0.900 1)" x="56.89 65.52 82.81 91.44 108.73 117.37 134.66 143.29 160.58 169.21 186.50 195.13 212.42 221.06 238.34 246.98 264.27 272.90 290.19 298.82 316.11 324.74 342.03 350.67 367.96 376.59 393.88 402.51 419.80 428.43 445.72 454.36" y="334.90" font-family="Liberation Mono" font-size="13.30" fill="#e8e8e6">O8OO24OOOOOOOOOOOOOO2OOOOOOOOOOO</text>
<text transform="scale(0.900 1)" x="478.44 487.33 496.22 505.11 514.00 522.89 531.78 540.67 549.56 558.44 567.33 576.22 585.11 594.00 602.89 611.78" y="334.90" font-family="Liberation Mono" font-size="13.30" fill="#e8e8e6">..$....... .....</text>
<text transform="scale(0.900 1)" x="7.33 15.78 24.22 32.67" y="353.90" font-family="Liberation Mono" font-size="13.30" fill="#9a948c">OOBO</text>
<text transform="scale(0.900 1)" x="56.89 65.52 82.81 91.44 108.73 117.37 134.66 143.29 160.58 169.21 186.50 195.13 212.42 221.06 238.34 246.98 264.27 272.90 290.19 298.82 316.11 324.74 342.03 350.67 367.96 376.59 393.88 402.51 419.80 428.43 445.72 454.36" y="353.90" font-family="Liberation Mono" font-size="13.30" fill="#e8e8e6">OOOO666C61672E747874OAOO2OOOOOOO</text>
<text transform="scale(0.900 1)" x="478.44 487.33 496.22 505.11 514.00 522.89 531.78 540.67 549.56 558.44 567.33 576.22 585.11 594.00 602.89 611.78" y="353.90" font-family="Liberation Mono" font-size="13.30" fill="#e8e8e6">..flag.txt.. ...</text>
<text transform="scale(0.900 1)" x="7.33 15.78 24.22 32.67" y="372.90" font-family="Liberation Mono" font-size="13.30" fill="#9a948c">OOCO</text>
<text transform="scale(0.900 1)" x="56.89 65.52 82.81 91.44 108.73 117.37 134.66 143.29 160.58 169.21 186.50 195.13 212.42 221.06 238.34 246.98 264.27 272.90 290.19 298.82 316.11 324.74 342.03 350.67 367.96 376.59 393.88 402.51 419.80 428.43 445.72 454.36" y="372.90" font-family="Liberation Mono" font-size="13.30" fill="#e8e8e6">OOOOO1OO18OOO74FAA848BCFD9O1A28C</text>
<text transform="scale(0.900 1)" x="478.44 487.33 496.22 505.11 514.00 522.89 531.78 540.67 549.56 558.44 567.33 576.22 585.11 594.00 602.89 611.78" y="372.90" font-family="Liberation Mono" font-size="13.30" fill="#e8e8e6">.......Oª„‹ÏÙ.¢Œ</text>
<text transform="scale(0.900 1)" x="7.33 15.78 24.22 32.67" y="391.90" font-family="Liberation Mono" font-size="13.30" fill="#9a948c">OODO</text>
<text transform="scale(0.900 1)" x="56.89 65.52 82.81 91.44 108.73 117.37 134.66 143.29 160.58 169.21 186.50 195.13 212.42 221.06 238.34 246.98 264.27 272.90 290.19 298.82 316.11 324.74 342.03 350.67 367.96 376.59 393.88 402.51 419.80 428.43 445.72 454.36" y="391.90" font-family="Liberation Mono" font-size="13.30" fill="#e8e8e6">9F878BCFD9O11172656O8BCFD9O15O4B</text>
<text transform="scale(0.900 1)" x="478.44 487.33 496.22 505.11 514.00 522.89 531.78 540.67 549.56 558.44 567.33 576.22 585.11 594.00 602.89 611.78" y="391.90" font-family="Liberation Mono" font-size="13.30" fill="#e8e8e6">Ÿ‡‹ÏÙ..re`‹ÏÙ.PK</text>
<text transform="scale(0.900 1)" x="7.33 15.78 24.22 32.67" y="410.90" font-family="Liberation Mono" font-size="13.30" fill="#9a948c">OOEO</text>
<text transform="scale(0.900 1)" x="56.89 65.52 82.81 91.44 108.73 117.37 134.66 143.29 160.58 169.21 186.50 195.13 212.42 221.06 238.34 246.98 264.27 272.90 290.19 298.82 316.11 324.74 342.03 350.67 367.96 376.59 393.88 402.51 419.80 428.43 445.72 454.36" y="410.90" font-family="Liberation Mono" font-size="13.30" fill="#e8e8e6">O5O6OOOOOOOOO1OOO1OO5AOOOOOO5EOO</text>
<text transform="scale(0.900 1)" x="478.44 487.33 496.22 505.11 514.00 522.89 531.78 540.67 549.56 558.44 567.33 576.22 585.11 594.00 602.89 611.78" y="410.90" font-family="Liberation Mono" font-size="13.30" fill="#e8e8e6">..........Z...^.</text>
<text transform="scale(0.900 1)" x="7.33 15.78 24.22 32.67" y="429.90" font-family="Liberation Mono" font-size="13.30" fill="#9a948c">OOFO</text>
<text transform="scale(0.900 1)" x="56.89 65.52 82.81 91.44 108.73 117.37 134.66 143.29 160.58 169.21 186.50 195.13 212.42 221.06 238.34 246.98 264.27 272.90 290.19 298.82 316.11 324.74 342.03 350.67 367.96 376.59 393.88 402.51 419.80 428.43 445.72 454.36" y="429.90" font-family="Liberation Mono" font-size="13.30" fill="#e8e8e6">OOOO68OO535342736157746C49484E7O</text>
<text transform="scale(0.900 1)" x="478.44 487.33 496.22 505.11 514.00 522.89 531.78 540.67 549.56 558.44 567.33 576.22 585.11 594.00 602.89 611.78" y="429.90" font-family="Liberation Mono" font-size="13.30" fill="#e8e8e6">..h.SSBsaWtlIHNp</text>
<text transform="scale(0.900 1)" x="7.33 15.78 24.22 32.67" y="448.90" font-family="Liberation Mono" font-size="13.30" fill="#9a948c">O1OO</text>
<text transform="scale(0.900 1)" x="56.89 65.52 82.81 91.44 108.73 117.37 134.66 143.29 160.58 169.21 186.50 195.13 212.42 221.06 238.34 246.98 264.27 272.90 290.19 298.82 316.11 324.74 342.03 350.67 367.96 376.59 393.88 402.51 419.80 428.43 445.72 454.36" y="448.90" font-family="Liberation Mono" font-size="13.30" fill="#e8e8e6">6543316B6157647O6443427564573169</text>
<text transform="scale(0.900 1)" x="478.44 487.33 496.22 505.11 514.00 522.89 531.78 540.67 549.56 558.44 567.33 576.22 585.11 594.00 602.89 611.78" y="448.90" font-family="Liberation Mono" font-size="13.30" fill="#e8e8e6">eC1kaWdpdCBudW1i</text>
<text transform="scale(0.900 1)" x="7.33 15.78 24.22 32.67" y="467.90" font-family="Liberation Mono" font-size="13.30" fill="#9a948c">O11O</text>
<text transform="scale(0.900 1)" x="56.89 65.52 82.81 91.44 108.73 117.37 134.66 143.29 160.58 169.21 186.50 195.13 212.42 221.06 238.34 246.98 264.27 272.90 290.19 298.82 316.11 324.74 342.03 350.67 367.96 376.59 393.88 402.51 419.80 428.43 445.72 454.36" y="467.90" font-family="Liberation Mono" font-size="13.30" fill="#e8e8e6">5A584A7A49474A6C5932463163325567</text>
<text transform="scale(0.900 1)" x="478.44 487.33 496.22 505.11 514.00 522.89 531.78 540.67 549.56 558.44 567.33 576.22 585.11 594.00 602.89 611.78" y="467.90" font-family="Liberation Mono" font-size="13.30" fill="#e8e8e6">ZXJzIGJlY2F1c2Ug</text>
<text transform="scale(0.900 1)" x="7.33 15.78 24.22 32.67" y="486.90" font-family="Liberation Mono" font-size="13.30" fill="#9a948c">O12O</text>
<text transform="scale(0.900 1)" x="56.89 65.52 82.81 91.44 108.73 117.37 134.66 143.29 160.58 169.21 186.50 195.13 212.42 221.06 238.34 246.98 264.27 272.90 290.19 298.82 316.11 324.74 342.03 350.67 367.96 376.59 393.88 402.51 419.80 428.43 445.72 454.36" y="486.90" font-family="Liberation Mono" font-size="13.30" fill="#e8e8e6">6447686C65534268636D5567646D5679</text>
<text transform="scale(0.900 1)" x="478.44 487.33 496.22 505.11 514.00 522.89 531.78 540.67 549.56 558.44 567.33 576.22 585.11 594.00 602.89 611.78" y="486.90" font-family="Liberation Mono" font-size="13.30" fill="#e8e8e6">dGhleSBhcmUgdmVy</text>
<text transform="scale(0.900 1)" x="7.33 15.78 24.22 32.67" y="505.90" font-family="Liberation Mono" font-size="13.30" fill="#9a948c">O13O</text>
<text transform="scale(0.900 1)" x="56.89 65.52 82.81 91.44 108.73 117.37 134.66 143.29 160.58 169.21 186.50 195.13 212.42 221.06 238.34 246.98 264.27 272.90 290.19 298.82 316.11 324.74 342.03 350.67 367.96 376.59 393.88 402.51 419.80 428.43 445.72 454.36" y="505.90" font-family="Liberation Mono" font-size="13.30" fill="#e8e8e6">6553426A6232356A61584E6C49474675</text>
<text transform="scale(0.900 1)" x="478.44 487.33 496.22 505.11 514.00 522.89 531.78 540.67 549.56 558.44 567.33 576.22 585.11 594.00 602.89 611.78" y="505.90" font-family="Liberation Mono" font-size="13.30" fill="#e8e8e6">eSBjb25jaXNlIGFu</text>
<text transform="scale(0.900 1)" x="7.33 15.78 24.22 32.67" y="524.90" font-family="Liberation Mono" font-size="13.30" fill="#9a948c">O14O</text>
<text transform="scale(0.900 1)" x="56.89 65.52 82.81 91.44 108.73 117.37 134.66 143.29 160.58 169.21 186.50 195.13 212.42 221.06 238.34 246.98 264.27 272.90 290.19 298.82 316.11 324.74 342.03 350.67 367.96 376.59 393.88 402.51 419.80 428.43 445.72 454.36" y="524.90" font-family="Liberation Mono" font-size="13.30" fill="#e8e8e6">5A43426C59584E354948527649484A6C</text>
<text transform="scale(0.900 1)" x="478.44 487.33 496.22 505.11 514.00 522.89 531.78 540.67 549.56 558.44 567.33 576.22 585.11 594.00 602.89 611.78" y="524.90" font-family="Liberation Mono" font-size="13.30" fill="#e8e8e6">ZCBlYXN5IHRvIHJl</text>
<text transform="scale(0.900 1)" x="7.33 15.78 24.22 32.67" y="543.90" font-family="Liberation Mono" font-size="13.30" fill="#9a948c">O15O</text>
<text transform="scale(0.900 1)" x="56.89 65.52 82.81 91.44 108.73 117.37 134.66 143.29 160.58 169.21 186.50 195.13 212.42 221.06 238.34 246.98 264.27 272.90 290.19 298.82 316.11 324.74 342.03 350.67 367.96 376.59 393.88 402.51 419.80 428.43 445.72 454.36" y="543.90" font-family="Liberation Mono" font-size="13.30" fill="#e8e8e6">62575674596D56794C673D3D5O4BO1O2</text>
<text transform="scale(0.900 1)" x="478.44 487.33 496.22 505.11 514.00 522.89 531.78 540.67 549.56 558.44 567.33 576.22 585.11 594.00 602.89 611.78" y="543.90" font-family="Liberation Mono" font-size="13.30" fill="#e8e8e6">bWVtYmVyLg==PK..</text>
<text transform="scale(0.900 1)" x="7.33 15.78 24.22 32.67" y="562.90" font-family="Liberation Mono" font-size="13.30" fill="#9a948c">O16O</text>
<text transform="scale(0.900 1)" x="56.89 65.52 82.81 91.44 108.73 117.37 134.66 143.29 160.58 169.21 186.50 195.13 212.42 221.06 238.34 246.98 264.27 272.90 290.19 298.82 316.11 324.74 342.03 350.67 367.96 376.59 393.88 402.51 419.80 428.43 445.72 454.36" y="562.90" font-family="Liberation Mono" font-size="13.30" fill="#e8e8e6">14OO14OOOOOOOOOO68BAOF5734317417</text>
<text transform="scale(0.900 1)" x="478.44 487.33 496.22 505.11 514.00 522.89 531.78 540.67 549.56 558.44 567.33 576.22 585.11 594.00 602.89 611.78" y="562.90" font-family="Liberation Mono" font-size="13.30" fill="#e8e8e6">........hº.W41t.</text>
<text transform="scale(0.900 1)" x="7.33 15.78 24.22 32.67" y="581.90" font-family="Liberation Mono" font-size="13.30" fill="#9a948c">O17O</text>
<text transform="scale(0.900 1)" x="56.89 65.52 82.81 91.44 108.73 117.37 134.66 143.29 160.58 169.21 186.50 195.13 212.42 221.06 238.34 246.98 264.27 272.90 290.19 298.82 316.11 324.74 342.03 350.67 367.96 376.59 393.88 402.51 419.80 428.43 445.72 454.36" y="581.90" font-family="Liberation Mono" font-size="13.30" fill="#e8e8e6">36O1OOOO36O1OOOOO8OOOOOOOOOOOOOO</text>
<text transform="scale(0.900 1)" x="478.44 487.33 496.22 505.11 514.00 522.89 531.78 540.67 549.56 558.44 567.33 576.22 585.11 594.00 602.89 611.78" y="581.90" font-family="Liberation Mono" font-size="13.30" fill="#e8e8e6">6...6...........</text>
<text transform="scale(0.900 1)" x="7.33 15.78 24.22 32.67" y="600.90" font-family="Liberation Mono" font-size="13.30" fill="#9a948c">O18O</text>
<text transform="scale(0.900 1)" x="56.89 65.52 82.81 91.44 108.73 117.37 134.66 143.29 160.58 169.21 186.50 195.13 212.42 221.06 238.34 246.98 264.27 272.90 290.19 298.82 316.11 324.74 342.03 350.67 367.96 376.59 393.88 402.51 419.80 428.43 445.72 454.36" y="600.90" font-family="Liberation Mono" font-size="13.30" fill="#e8e8e6">OOOO2OOOOOOOOOOOOOOO666C61672E7A</text>
<text transform="scale(0.900 1)" x="478.44 487.33 496.22 505.11 514.00 522.89 531.78 540.67 549.56 558.44 567.33 576.22 585.11 594.00 602.89 611.78" y="600.90" font-family="Liberation Mono" font-size="13.30" fill="#e8e8e6">.. .......flag.z</text>
<text transform="scale(0.900 1)" x="7.33 15.78 24.22 32.67" y="619.90" font-family="Liberation Mono" font-size="13.30" fill="#9a948c">O19O</text>
<text transform="scale(0.900 1)" x="56.89 65.52 82.81 91.44 108.73 117.37 134.66 143.29 160.58 169.21 186.50 195.13 212.42 221.06 238.34 246.98 264.27 272.90 290.19 298.82 316.11 324.74 342.03 350.67 367.96 376.59 393.88 402.51 419.80 428.43 445.72 454.36" y="619.90" font-family="Liberation Mono" font-size="13.30" fill="#e8e8e6">697O5O4BO5O6OOOOOOOOO1OOO1OO36OO</text>
<text transform="scale(0.900 1)" x="478.44 487.33 496.22 505.11 514.00 522.89 531.78 540.67 549.56 558.44 567.33 576.22 585.11 594.00 602.89 611.78" y="619.90" font-family="Liberation Mono" font-size="13.30" fill="#e8e8e6">ipPK..........6.</text>
<text transform="scale(0.900 1)" x="7.33 15.78 24.22 32.67" y="638.90" font-family="Liberation Mono" font-size="13.30" fill="#9a948c">O1AO</text>
<text transform="scale(0.900 1)" x="56.89 65.52 82.81 91.44 108.73 117.37 134.66 143.29 160.58 169.21 186.50 195.13 212.42 221.06 238.34 246.98" y="638.90" font-family="Liberation Mono" font-size="13.30" fill="#e8e8e6">OOOO5CO1OOOOOOOO</text>
<text transform="scale(0.900 1)" x="478.44 487.33 496.22 505.11 514.00 522.89 531.78 540.67" y="638.90" font-family="Liberation Mono" font-size="13.30" fill="#e8e8e6">..\.....</text>
<rect x="733" y="115" width="1" height="534" fill="#2b2a28"/>
<rect x="734" y="115" width="2" height="2" fill="#26395e"/>
<rect x="736" y="115" width="2" height="2" fill="#26395e"/>
<rect x="738" y="115" width="2" height="2" fill="#26395e"/>
<rect x="740" y="115" width="2" height="2" fill="#26395e"/>
<rect x="742" y="115" width="2" height="2" fill="#3a4a6a"/>
<rect x="744" y="115" width="2" height="2" fill="#26395e"/>
<rect x="746" y="115" width="2" height="2" fill="#26395e"/>
<rect x="748" y="115" width="2" height="2" fill="#26395e"/>
<rect x="750" y="115" width="2" height="2" fill="#26395e"/>
<rect x="752" y="115" width="2" height="2" fill="#26395e"/>
<rect x="754" y="115" width="2" height="2" fill="#3a4a6a"/>
<rect x="756" y="115" width="2" height="2" fill="#3a4a6a"/>
<rect x="758" y="115" width="2" height="2" fill="#3a4a6a"/>
<rect x="760" y="115" width="2" height="2" fill="#3a4a6a"/>
<rect x="762" y="115" width="2" height="2" fill="#3a4a6a"/>
<rect x="764" y="115" width="2" height="2" fill="#3a4a6a"/>
<rect x="734" y="117" width="2" height="2" fill="#484744"/>
<rect x="736" y="117" width="2" height="2" fill="#474643"/>
<rect x="738" y="117" width="2" height="2" fill="#464542"/>
<rect x="740" y="117" width="2" height="2" fill="#474643"/>
<rect x="742" y="117" width="2" height="2" fill="#32312e"/>
<rect x="744" y="117" width="2" height="2" fill="#32312e"/>
<rect x="746" y="117" width="2" height="2" fill="#464542"/>
<rect x="748" y="117" width="2" height="2" fill="#474643"/>
<rect x="750" y="117" width="2" height="2" fill="#32312e"/>
<rect x="752" y="117" width="2" height="2" fill="#32312e"/>
<rect x="754" y="117" width="2" height="2" fill="#42413e"/>
<rect x="756" y="117" width="2" height="2" fill="#32312e"/>
<rect x="758" y="117" width="2" height="2" fill="#32312e"/>
<rect x="760" y="117" width="2" height="2" fill="#32312e"/>
<rect x="762" y="117" width="2" height="2" fill="#464542"/>
<rect x="764" y="117" width="2" height="2" fill="#403f3c"/>
<rect x="734" y="119" width="2" height="2" fill="#41403d"/>
<rect x="736" y="119" width="2" height="2" fill="#474643"/>
<rect x="738" y="119" width="2" height="2" fill="#403f3c"/>
<rect x="740" y="119" width="2" height="2" fill="#42413e"/>
<rect x="742" y="119" width="2" height="2" fill="#494845"/>
<rect x="744" y="119" width="2" height="2" fill="#444340"/>
<rect x="746" y="119" width="2" height="2" fill="#484744"/>
<rect x="748" y="119" width="2" height="2" fill="#43423f"/>
<rect x="750" y="119" width="2" height="2" fill="#393835"/>
<rect x="752" y="119" width="2" height="2" fill="#484744"/>
<rect x="754" y="119" width="2" height="2" fill="#464542"/>
<rect x="756" y="119" width="2" height="2" fill="#32312e"/>
<rect x="758" y="119" width="2" height="2" fill="#3b3a37"/>
<rect x="760" y="119" width="2" height="2" fill="#32312e"/>
<rect x="762" y="119" width="2" height="2" fill="#42413e"/>
<rect x="764" y="119" width="2" height="2" fill="#32312e"/>
<rect x="734" y="121" width="2" height="2" fill="#484744"/>
<rect x="736" y="121" width="2" height="2" fill="#4a4946"/>
<rect x="738" y="121" width="2" height="2" fill="#3d3c39"/>
<rect x="740" y="121" width="2" height="2" fill="#43423f"/>
<rect x="742" y="121" width="2" height="2" fill="#444340"/>
<rect x="744" y="121" width="2" height="2" fill="#3d3c39"/>
<rect x="746" y="121" width="2" height="2" fill="#454441"/>
<rect x="748" y="121" width="2" height="2" fill="#42413e"/>
<rect x="750" y="121" width="2" height="2" fill="#484744"/>
<rect x="752" y="121" width="2" height="2" fill="#32312e"/>
<rect x="754" y="121" width="2" height="2" fill="#32312e"/>
<rect x="756" y="121" width="2" height="2" fill="#32312e"/>
<rect x="758" y="121" width="2" height="2" fill="#383734"/>
<rect x="760" y="121" width="2" height="2" fill="#32312e"/>
<rect x="762" y="121" width="2" height="2" fill="#32312e"/>
<rect x="764" y="121" width="2" height="2" fill="#32312e"/>
<rect x="734" y="123" width="2" height="2" fill="#42413e"/>
<rect x="736" y="123" width="2" height="2" fill="#32312e"/>
<rect x="738" y="123" width="2" height="2" fill="#32312e"/>
<rect x="740" y="123" width="2" height="2" fill="#32312e"/>
<rect x="742" y="123" width="2" height="2" fill="#464542"/>
<rect x="744" y="123" width="2" height="2" fill="#403f3c"/>
<rect x="746" y="123" width="2" height="2" fill="#41403d"/>
<rect x="748" y="123" width="2" height="2" fill="#474643"/>
<rect x="750" y="123" width="2" height="2" fill="#403f3c"/>
<rect x="752" y="123" width="2" height="2" fill="#484744"/>
<rect x="754" y="123" width="2" height="2" fill="#403f3c"/>
<rect x="756" y="123" width="2" height="2" fill="#484744"/>
<rect x="758" y="123" width="2" height="2" fill="#494845"/>
<rect x="760" y="123" width="2" height="2" fill="#43423f"/>
<rect x="762" y="123" width="2" height="2" fill="#3a3936"/>
<rect x="764" y="123" width="2" height="2" fill="#3c3b38"/>
<rect x="734" y="125" width="2" height="2" fill="#444340"/>
<rect x="736" y="125" width="2" height="2" fill="#4a4946"/>
<rect x="738" y="125" width="2" height="2" fill="#444340"/>
<rect x="740" y="125" width="2" height="2" fill="#3e3d3a"/>
<rect x="742" y="125" width="2" height="2" fill="#41403d"/>
<rect x="744" y="125" width="2" height="2" fill="#474643"/>
<rect x="746" y="125" width="2" height="2" fill="#444340"/>
<rect x="748" y="125" width="2" height="2" fill="#454441"/>
<rect x="750" y="125" width="2" height="2" fill="#41403d"/>
<rect x="752" y="125" width="2" height="2" fill="#454441"/>
<rect x="754" y="125" width="2" height="2" fill="#474643"/>
<rect x="756" y="125" width="2" height="2" fill="#484744"/>
<rect x="758" y="125" width="2" height="2" fill="#464542"/>
<rect x="760" y="125" width="2" height="2" fill="#464542"/>
<rect x="762" y="125" width="2" height="2" fill="#3d3c39"/>
<rect x="764" y="125" width="2" height="2" fill="#3e3d3a"/>
<rect x="734" y="127" width="2" height="2" fill="#3d3c39"/>
<rect x="736" y="127" width="2" height="2" fill="#444340"/>
<rect x="738" y="127" width="2" height="2" fill="#464542"/>
<rect x="740" y="127" width="2" height="2" fill="#383734"/>
<rect x="742" y="127" width="2" height="2" fill="#32312e"/>
<rect x="744" y="127" width="2" height="2" fill="#403f3c"/>
<rect x="746" y="127" width="2" height="2" fill="#3a3936"/>
<rect x="748" y="127" width="2" height="2" fill="#4a4946"/>
<rect x="750" y="127" width="2" height="2" fill="#393835"/>
<rect x="752" y="127" width="2" height="2" fill="#464542"/>
<rect x="754" y="127" width="2" height="2" fill="#3a3936"/>
<rect x="756" y="127" width="2" height="2" fill="#41403d"/>
<rect x="758" y="127" width="2" height="2" fill="#4b4a47"/>
<rect x="760" y="127" width="2" height="2" fill="#41403d"/>
<rect x="762" y="127" width="2" height="2" fill="#41403d"/>
<rect x="764" y="127" width="2" height="2" fill="#403f3c"/>
<rect x="734" y="129" width="2" height="2" fill="#43423f"/>
<rect x="736" y="129" width="2" height="2" fill="#383734"/>
<rect x="738" y="129" width="2" height="2" fill="#474643"/>
<rect x="740" y="129" width="2" height="2" fill="#42413e"/>
<rect x="742" y="129" width="2" height="2" fill="#474643"/>
<rect x="744" y="129" width="2" height="2" fill="#4d4c49"/>
<rect x="746" y="129" width="2" height="2" fill="#474643"/>
<rect x="748" y="129" width="2" height="2" fill="#444340"/>
<rect x="750" y="129" width="2" height="2" fill="#484744"/>
<rect x="752" y="129" width="2" height="2" fill="#4a4946"/>
<rect x="754" y="129" width="2" height="2" fill="#3e3d3a"/>
<rect x="756" y="129" width="2" height="2" fill="#4a4946"/>
<rect x="758" y="129" width="2" height="2" fill="#4d4c49"/>
<rect x="760" y="129" width="2" height="2" fill="#3e3d3a"/>
<rect x="762" y="129" width="2" height="2" fill="#454441"/>
<rect x="764" y="129" width="2" height="2" fill="#484744"/>
<rect x="734" y="131" width="2" height="2" fill="#4a4946"/>
<rect x="736" y="131" width="2" height="2" fill="#4b4a47"/>
<rect x="738" y="131" width="2" height="2" fill="#4d4c49"/>
<rect x="740" y="131" width="2" height="2" fill="#454441"/>
<rect x="742" y="131" width="2" height="2" fill="#484744"/>
<rect x="744" y="131" width="2" height="2" fill="#43423f"/>
<rect x="746" y="131" width="2" height="2" fill="#474643"/>
<rect x="748" y="131" width="2" height="2" fill="#403f3c"/>
<rect x="750" y="131" width="2" height="2" fill="#464542"/>
<rect x="752" y="131" width="2" height="2" fill="#32312e"/>
<rect x="754" y="131" width="2" height="2" fill="#464542"/>
<rect x="756" y="131" width="2" height="2" fill="#32312e"/>
<rect x="758" y="131" width="2" height="2" fill="#32312e"/>
<rect x="760" y="131" width="2" height="2" fill="#32312e"/>
<rect x="762" y="131" width="2" height="2" fill="#42413e"/>
<rect x="764" y="131" width="2" height="2" fill="#32312e"/>
<rect x="734" y="133" width="2" height="2" fill="#484744"/>
<rect x="736" y="133" width="2" height="2" fill="#4a4946"/>
<rect x="738" y="133" width="2" height="2" fill="#3d3c39"/>
<rect x="740" y="133" width="2" height="2" fill="#43423f"/>
<rect x="742" y="133" width="2" height="2" fill="#444340"/>
<rect x="744" y="133" width="2" height="2" fill="#3d3c39"/>
<rect x="746" y="133" width="2" height="2" fill="#454441"/>
<rect x="748" y="133" width="2" height="2" fill="#42413e"/>
<rect x="750" y="133" width="2" height="2" fill="#484744"/>
<rect x="752" y="133" width="2" height="2" fill="#32312e"/>
<rect x="754" y="133" width="2" height="2" fill="#32312e"/>
<rect x="756" y="133" width="2" height="2" fill="#32312e"/>
<rect x="758" y="133" width="2" height="2" fill="#383734"/>
<rect x="760" y="133" width="2" height="2" fill="#32312e"/>
<rect x="762" y="133" width="2" height="2" fill="#32312e"/>
<rect x="764" y="133" width="2" height="2" fill="#32312e"/>
<rect x="734" y="135" width="2" height="2" fill="#42413e"/>
<rect x="736" y="135" width="2" height="2" fill="#32312e"/>
<rect x="738" y="135" width="2" height="2" fill="#444340"/>
<rect x="740" y="135" width="2" height="2" fill="#32312e"/>
<rect x="742" y="135" width="2" height="2" fill="#32312e"/>
<rect x="744" y="135" width="2" height="2" fill="#32312e"/>
<rect x="746" y="135" width="2" height="2" fill="#32312e"/>
<rect x="748" y="135" width="2" height="2" fill="#32312e"/>
<rect x="750" y="135" width="2" height="2" fill="#32312e"/>
<rect x="752" y="135" width="2" height="2" fill="#32312e"/>
<rect x="754" y="135" width="2" height="2" fill="#4a4946"/>
<rect x="756" y="135" width="2" height="2" fill="#32312e"/>
<rect x="758" y="135" width="2" height="2" fill="#32312e"/>
<rect x="760" y="135" width="2" height="2" fill="#32312e"/>
<rect x="762" y="135" width="2" height="2" fill="#32312e"/>
<rect x="764" y="135" width="2" height="2" fill="#32312e"/>
<rect x="734" y="137" width="2" height="2" fill="#32312e"/>
<rect x="736" y="137" width="2" height="2" fill="#32312e"/>
<rect x="738" y="137" width="2" height="2" fill="#464542"/>
<rect x="740" y="137" width="2" height="2" fill="#403f3c"/>
<rect x="742" y="137" width="2" height="2" fill="#41403d"/>
<rect x="744" y="137" width="2" height="2" fill="#474643"/>
<rect x="746" y="137" width="2" height="2" fill="#403f3c"/>
<rect x="748" y="137" width="2" height="2" fill="#484744"/>
<rect x="750" y="137" width="2" height="2" fill="#403f3c"/>
<rect x="752" y="137" width="2" height="2" fill="#484744"/>
<rect x="754" y="137" width="2" height="2" fill="#4a4946"/>
<rect x="756" y="137" width="2" height="2" fill="#32312e"/>
<rect x="758" y="137" width="2" height="2" fill="#4a4946"/>
<rect x="760" y="137" width="2" height="2" fill="#32312e"/>
<rect x="762" y="137" width="2" height="2" fill="#32312e"/>
<rect x="764" y="137" width="2" height="2" fill="#32312e"/>
<rect x="734" y="139" width="2" height="2" fill="#32312e"/>
<rect x="736" y="139" width="2" height="2" fill="#32312e"/>
<rect x="738" y="139" width="2" height="2" fill="#474643"/>
<rect x="740" y="139" width="2" height="2" fill="#32312e"/>
<rect x="742" y="139" width="2" height="2" fill="#403f3c"/>
<rect x="744" y="139" width="2" height="2" fill="#32312e"/>
<rect x="746" y="139" width="2" height="2" fill="#494845"/>
<rect x="748" y="139" width="2" height="2" fill="#474643"/>
<rect x="750" y="139" width="2" height="2" fill="#4c4b48"/>
<rect x="752" y="139" width="2" height="2" fill="#383734"/>
<rect x="754" y="139" width="2" height="2" fill="#494845"/>
<rect x="756" y="139" width="2" height="2" fill="#3b3a37"/>
<rect x="758" y="139" width="2" height="2" fill="#4d4c49"/>
<rect x="760" y="139" width="2" height="2" fill="#474643"/>
<rect x="762" y="139" width="2" height="2" fill="#42413e"/>
<rect x="764" y="139" width="2" height="2" fill="#42413e"/>
<rect x="734" y="141" width="2" height="2" fill="#41403d"/>
<rect x="736" y="141" width="2" height="2" fill="#393835"/>
<rect x="738" y="141" width="2" height="2" fill="#494845"/>
<rect x="740" y="141" width="2" height="2" fill="#3b3a37"/>
<rect x="742" y="141" width="2" height="2" fill="#4d4c49"/>
<rect x="744" y="141" width="2" height="2" fill="#474643"/>
<rect x="746" y="141" width="2" height="2" fill="#454441"/>
<rect x="748" y="141" width="2" height="2" fill="#464542"/>
<rect x="750" y="141" width="2" height="2" fill="#454441"/>
<rect x="752" y="141" width="2" height="2" fill="#403f3c"/>
<rect x="754" y="141" width="2" height="2" fill="#494845"/>
<rect x="756" y="141" width="2" height="2" fill="#3b3a37"/>
<rect x="758" y="141" width="2" height="2" fill="#4d4c49"/>
<rect x="760" y="141" width="2" height="2" fill="#474643"/>
<rect x="762" y="141" width="2" height="2" fill="#484744"/>
<rect x="764" y="141" width="2" height="2" fill="#43423f"/>
<rect x="734" y="143" width="2" height="2" fill="#41403d"/>
<rect x="736" y="143" width="2" height="2" fill="#3a3936"/>
<rect x="738" y="143" width="2" height="2" fill="#32312e"/>
<rect x="740" y="143" width="2" height="2" fill="#32312e"/>
<rect x="742" y="143" width="2" height="2" fill="#32312e"/>
<rect x="744" y="143" width="2" height="2" fill="#32312e"/>
<rect x="746" y="143" width="2" height="2" fill="#474643"/>
<rect x="748" y="143" width="2" height="2" fill="#32312e"/>
<rect x="750" y="143" width="2" height="2" fill="#474643"/>
<rect x="752" y="143" width="2" height="2" fill="#32312e"/>
<rect x="754" y="143" width="2" height="2" fill="#464542"/>
<rect x="756" y="143" width="2" height="2" fill="#32312e"/>
<rect x="758" y="143" width="2" height="2" fill="#32312e"/>
<rect x="760" y="143" width="2" height="2" fill="#32312e"/>
<rect x="762" y="143" width="2" height="2" fill="#4a4946"/>
<rect x="764" y="143" width="2" height="2" fill="#32312e"/>
<rect x="734" y="145" width="2" height="2" fill="#32312e"/>
<rect x="736" y="145" width="2" height="2" fill="#32312e"/>
<rect x="738" y="145" width="2" height="2" fill="#484744"/>
<rect x="740" y="145" width="2" height="2" fill="#32312e"/>
<rect x="742" y="145" width="2" height="2" fill="#4b4a47"/>
<rect x="744" y="145" width="2" height="2" fill="#4b4a47"/>
<rect x="746" y="145" width="2" height="2" fill="#464542"/>
<rect x="748" y="145" width="2" height="2" fill="#474643"/>
<rect x="750" y="145" width="2" height="2" fill="#41403d"/>
<rect x="752" y="145" width="2" height="2" fill="#43423f"/>
<rect x="754" y="145" width="2" height="2" fill="#484744"/>
<rect x="756" y="145" width="2" height="2" fill="#403f3c"/>
<rect x="758" y="145" width="2" height="2" fill="#41403d"/>
<rect x="760" y="145" width="2" height="2" fill="#403f3c"/>
<rect x="762" y="145" width="2" height="2" fill="#464542"/>
<rect x="764" y="145" width="2" height="2" fill="#444340"/>
<rect x="734" y="147" width="2" height="2" fill="#454441"/>
<rect x="736" y="147" width="2" height="2" fill="#474643"/>
<rect x="738" y="147" width="2" height="2" fill="#41403d"/>
<rect x="740" y="147" width="2" height="2" fill="#4b4a47"/>
<rect x="742" y="147" width="2" height="2" fill="#41403d"/>
<rect x="744" y="147" width="2" height="2" fill="#43423f"/>
<rect x="746" y="147" width="2" height="2" fill="#444340"/>
<rect x="748" y="147" width="2" height="2" fill="#444340"/>
<rect x="750" y="147" width="2" height="2" fill="#444340"/>
<rect x="752" y="147" width="2" height="2" fill="#474643"/>
<rect x="754" y="147" width="2" height="2" fill="#464542"/>
<rect x="756" y="147" width="2" height="2" fill="#494845"/>
<rect x="758" y="147" width="2" height="2" fill="#444340"/>
<rect x="760" y="147" width="2" height="2" fill="#43423f"/>
<rect x="762" y="147" width="2" height="2" fill="#41403d"/>
<rect x="764" y="147" width="2" height="2" fill="#494845"/>
<rect x="734" y="149" width="2" height="2" fill="#464542"/>
<rect x="736" y="149" width="2" height="2" fill="#444340"/>
<rect x="738" y="149" width="2" height="2" fill="#42413e"/>
<rect x="740" y="149" width="2" height="2" fill="#42413e"/>
<rect x="742" y="149" width="2" height="2" fill="#41403d"/>
<rect x="744" y="149" width="2" height="2" fill="#4b4a47"/>
<rect x="746" y="149" width="2" height="2" fill="#42413e"/>
<rect x="748" y="149" width="2" height="2" fill="#403f3c"/>
<rect x="750" y="149" width="2" height="2" fill="#454441"/>
<rect x="752" y="149" width="2" height="2" fill="#42413e"/>
<rect x="754" y="149" width="2" height="2" fill="#4a4946"/>
<rect x="756" y="149" width="2" height="2" fill="#41403d"/>
<rect x="758" y="149" width="2" height="2" fill="#43423f"/>
<rect x="760" y="149" width="2" height="2" fill="#42413e"/>
<rect x="762" y="149" width="2" height="2" fill="#41403d"/>
<rect x="764" y="149" width="2" height="2" fill="#474643"/>
<rect x="734" y="151" width="2" height="2" fill="#444340"/>
<rect x="736" y="151" width="2" height="2" fill="#4b4a47"/>
<rect x="738" y="151" width="2" height="2" fill="#484744"/>
<rect x="740" y="151" width="2" height="2" fill="#403f3c"/>
<rect x="742" y="151" width="2" height="2" fill="#454441"/>
<rect x="744" y="151" width="2" height="2" fill="#4b4a47"/>
<rect x="746" y="151" width="2" height="2" fill="#464542"/>
<rect x="748" y="151" width="2" height="2" fill="#484744"/>
<rect x="750" y="151" width="2" height="2" fill="#43423f"/>
<rect x="752" y="151" width="2" height="2" fill="#41403d"/>
<rect x="754" y="151" width="2" height="2" fill="#41403d"/>
<rect x="756" y="151" width="2" height="2" fill="#474643"/>
<rect x="758" y="151" width="2" height="2" fill="#444340"/>
<rect x="760" y="151" width="2" height="2" fill="#41403d"/>
<rect x="762" y="151" width="2" height="2" fill="#42413e"/>
<rect x="764" y="151" width="2" height="2" fill="#41403d"/>
<rect x="734" y="153" width="2" height="2" fill="#454441"/>
<rect x="736" y="153" width="2" height="2" fill="#4b4a47"/>
<rect x="738" y="153" width="2" height="2" fill="#464542"/>
<rect x="740" y="153" width="2" height="2" fill="#4a4946"/>
<rect x="742" y="153" width="2" height="2" fill="#42413e"/>
<rect x="744" y="153" width="2" height="2" fill="#42413e"/>
<rect x="746" y="153" width="2" height="2" fill="#454441"/>
<rect x="748" y="153" width="2" height="2" fill="#4a4946"/>
<rect x="750" y="153" width="2" height="2" fill="#41403d"/>
<rect x="752" y="153" width="2" height="2" fill="#444340"/>
<rect x="754" y="153" width="2" height="2" fill="#464542"/>
<rect x="756" y="153" width="2" height="2" fill="#403f3c"/>
<rect x="758" y="153" width="2" height="2" fill="#41403d"/>
<rect x="760" y="153" width="2" height="2" fill="#4b4a47"/>
<rect x="762" y="153" width="2" height="2" fill="#4a4946"/>
<rect x="764" y="153" width="2" height="2" fill="#494845"/>
<rect x="734" y="155" width="2" height="2" fill="#464542"/>
<rect x="736" y="155" width="2" height="2" fill="#474643"/>
<rect x="738" y="155" width="2" height="2" fill="#464542"/>
<rect x="740" y="155" width="2" height="2" fill="#403f3c"/>
<rect x="742" y="155" width="2" height="2" fill="#454441"/>
<rect x="744" y="155" width="2" height="2" fill="#444340"/>
<rect x="746" y="155" width="2" height="2" fill="#464542"/>
<rect x="748" y="155" width="2" height="2" fill="#454441"/>
<rect x="750" y="155" width="2" height="2" fill="#41403d"/>
<rect x="752" y="155" width="2" height="2" fill="#403f3c"/>
<rect x="754" y="155" width="2" height="2" fill="#4a4946"/>
<rect x="756" y="155" width="2" height="2" fill="#4a4946"/>
<rect x="758" y="155" width="2" height="2" fill="#41403d"/>
<rect x="760" y="155" width="2" height="2" fill="#403f3c"/>
<rect x="762" y="155" width="2" height="2" fill="#42413e"/>
<rect x="764" y="155" width="2" height="2" fill="#403f3c"/>
<rect x="734" y="157" width="2" height="2" fill="#42413e"/>
<rect x="736" y="157" width="2" height="2" fill="#43423f"/>
<rect x="738" y="157" width="2" height="2" fill="#42413e"/>
<rect x="740" y="157" width="2" height="2" fill="#484744"/>
<rect x="742" y="157" width="2" height="2" fill="#454441"/>
<rect x="744" y="157" width="2" height="2" fill="#41403d"/>
<rect x="746" y="157" width="2" height="2" fill="#42413e"/>
<rect x="748" y="157" width="2" height="2" fill="#41403d"/>
<rect x="750" y="157" width="2" height="2" fill="#444340"/>
<rect x="752" y="157" width="2" height="2" fill="#474643"/>
<rect x="754" y="157" width="2" height="2" fill="#41403d"/>
<rect x="756" y="157" width="2" height="2" fill="#41403d"/>
<rect x="758" y="157" width="2" height="2" fill="#484744"/>
<rect x="760" y="157" width="2" height="2" fill="#43423f"/>
<rect x="762" y="157" width="2" height="2" fill="#474643"/>
<rect x="764" y="157" width="2" height="2" fill="#403f3c"/>
<rect x="734" y="159" width="2" height="2" fill="#464542"/>
<rect x="736" y="159" width="2" height="2" fill="#32312e"/>
<rect x="738" y="159" width="2" height="2" fill="#464542"/>
<rect x="740" y="159" width="2" height="2" fill="#32312e"/>
<rect x="742" y="159" width="2" height="2" fill="#32312e"/>
<rect x="744" y="159" width="2" height="2" fill="#32312e"/>
<rect x="746" y="159" width="2" height="2" fill="#32312e"/>
<rect x="748" y="159" width="2" height="2" fill="#32312e"/>
<rect x="750" y="159" width="2" height="2" fill="#484744"/>
<rect x="752" y="159" width="2" height="2" fill="#4a4946"/>
<rect x="754" y="159" width="2" height="2" fill="#3d3c39"/>
<rect x="756" y="159" width="2" height="2" fill="#43423f"/>
<rect x="758" y="159" width="2" height="2" fill="#444340"/>
<rect x="760" y="159" width="2" height="2" fill="#41403d"/>
<rect x="762" y="159" width="2" height="2" fill="#484744"/>
<rect x="764" y="159" width="2" height="2" fill="#474643"/>
<rect x="734" y="161" width="2" height="2" fill="#464542"/>
<rect x="736" y="161" width="2" height="2" fill="#474643"/>
<rect x="738" y="161" width="2" height="2" fill="#32312e"/>
<rect x="740" y="161" width="2" height="2" fill="#32312e"/>
<rect x="742" y="161" width="2" height="2" fill="#464542"/>
<rect x="744" y="161" width="2" height="2" fill="#474643"/>
<rect x="746" y="161" width="2" height="2" fill="#32312e"/>
<rect x="748" y="161" width="2" height="2" fill="#32312e"/>
<rect x="750" y="161" width="2" height="2" fill="#42413e"/>
<rect x="752" y="161" width="2" height="2" fill="#32312e"/>
<rect x="754" y="161" width="2" height="2" fill="#32312e"/>
<rect x="756" y="161" width="2" height="2" fill="#32312e"/>
<rect x="758" y="161" width="2" height="2" fill="#32312e"/>
<rect x="760" y="161" width="2" height="2" fill="#32312e"/>
<rect x="762" y="161" width="2" height="2" fill="#32312e"/>
<rect x="764" y="161" width="2" height="2" fill="#32312e"/>
<rect x="734" y="163" width="2" height="2" fill="#32312e"/>
<rect x="736" y="163" width="2" height="2" fill="#32312e"/>
<rect x="738" y="163" width="2" height="2" fill="#4a4946"/>
<rect x="740" y="163" width="2" height="2" fill="#32312e"/>
<rect x="742" y="163" width="2" height="2" fill="#32312e"/>
<rect x="744" y="163" width="2" height="2" fill="#32312e"/>
<rect x="746" y="163" width="2" height="2" fill="#32312e"/>
<rect x="748" y="163" width="2" height="2" fill="#32312e"/>
<rect x="750" y="163" width="2" height="2" fill="#32312e"/>
<rect x="752" y="163" width="2" height="2" fill="#32312e"/>
<rect x="754" y="163" width="2" height="2" fill="#464542"/>
<rect x="756" y="163" width="2" height="2" fill="#403f3c"/>
<rect x="758" y="163" width="2" height="2" fill="#41403d"/>
<rect x="760" y="163" width="2" height="2" fill="#474643"/>
<rect x="762" y="163" width="2" height="2" fill="#403f3c"/>
<rect x="764" y="163" width="2" height="2" fill="#42413e"/>
<rect x="734" y="165" width="2" height="2" fill="#494845"/>
<rect x="736" y="165" width="2" height="2" fill="#444340"/>
<rect x="738" y="165" width="2" height="2" fill="#484744"/>
<rect x="740" y="165" width="2" height="2" fill="#43423f"/>
<rect x="742" y="165" width="2" height="2" fill="#41403d"/>
<rect x="744" y="165" width="2" height="2" fill="#3a3936"/>
<rect x="746" y="165" width="2" height="2" fill="#32312e"/>
<rect x="748" y="165" width="2" height="2" fill="#32312e"/>
<rect x="750" y="165" width="2" height="2" fill="#32312e"/>
<rect x="752" y="165" width="2" height="2" fill="#32312e"/>
<rect x="754" y="165" width="2" height="2" fill="#474643"/>
<rect x="756" y="165" width="2" height="2" fill="#32312e"/>
<rect x="758" y="165" width="2" height="2" fill="#474643"/>
<rect x="760" y="165" width="2" height="2" fill="#32312e"/>
<rect x="762" y="165" width="2" height="2" fill="#464542"/>
<rect x="764" y="165" width="2" height="2" fill="#32312e"/>
<rect x="734" y="167" width="2" height="2" fill="#32312e"/>
<rect x="736" y="167" width="2" height="2" fill="#32312e"/>
<rect x="738" y="167" width="2" height="2" fill="#484744"/>
<rect x="740" y="167" width="2" height="2" fill="#474643"/>
<rect x="742" y="167" width="2" height="2" fill="#32312e"/>
<rect x="744" y="167" width="2" height="2" fill="#32312e"/>
<rect x="746" y="167" width="2" height="2" fill="#32312e"/>
<rect x="748" y="167" width="2" height="2" fill="#32312e"/>
<rect x="767" y="118" width="13" height="528" fill="#575755"/>
<rect x="767" y="118" width="1" height="528" fill="#5e5e5c"/>
<rect x="767.5" y="118.5" width="12" height="13" fill="#565654" stroke="#6e6e6c" stroke-width="1"/>
<path d="M769.4 127.0 L773.5 122.8 L777.6 127.0 Z" fill="#c4c4c4"/>
<rect x="767" y="132" width="13" height="1" fill="#2c2c2a"/>
<rect x="767.5" y="133.5" width="12" height="252.0" fill="#5b5b59" stroke="#707070" stroke-width="1"/>
<rect x="767" y="386" width="13" height="1" fill="#2e2e2c"/>
<rect x="767" y="631" width="13" height="1" fill="#2c2c2a"/>
<rect x="767.5" y="632.5" width="12" height="13" fill="#565654" stroke="#6e6e6c" stroke-width="1"/>
<path d="M769.4 636.8 L773.5 641.0 L777.6 636.8 Z" fill="#c4c4c4"/>
<text x="788.80" y="104.10" font-family="Liberation Sans" font-size="12.90" fill="#d3d3d3" textLength="70.29" lengthAdjust="spacingAndGlyphs">Workspace</text>
<path d="M955.9 99 h7.1 l-3.55 4.1 z" fill="#d5d5d5"/>
<path d="M971.3 97.3 L978.8 104 M978.8 97.3 L971.3 104" stroke="#e6e6e6" stroke-width="1.4"/>
<path d="M784 132 V116 Q784 112 788 112 H979 Q983 112 983 116 V132 Z" fill="#4d4c49"/>
<rect x="883" y="112" width="1" height="20" fill="#3a3936"/>
<text x="820.69" y="126.90" font-family="Liberation Sans" font-weight="bold" font-size="12.90" fill="#e0e0e0" textLength="25.50" lengthAdjust="spacingAndGlyphs">File</text>
<text x="918.01" y="126.90" font-family="Liberation Sans" font-weight="bold" font-size="12.90" fill="#e0e0e0" textLength="31.67" lengthAdjust="spacingAndGlyphs">Path</text>
<text x="805.76" y="145.90" font-family="Liberation Sans" font-weight="bold" font-size="12.90" fill="#e2e2e2" textLength="70.65" lengthAdjust="spacingAndGlyphs">Open Files</text>
<text x="805.33" y="180.10" font-family="Liberation Sans" font-weight="bold" font-size="12.90" fill="#e2e2e2" textLength="48.54" lengthAdjust="spacingAndGlyphs">Project</text>
<text x="805.34" y="197.00" font-family="Liberation Sans" font-weight="bold" font-size="12.90" fill="#e2e2e2" textLength="91.01" lengthAdjust="spacingAndGlyphs">Favorite Files</text>
<text x="805.35" y="213.80" font-family="Liberation Sans" font-weight="bold" font-size="12.90" fill="#e2e2e2" textLength="82.70" lengthAdjust="spacingAndGlyphs">Recent Files</text>
<text x="805.35" y="230.60" font-family="Liberation Sans" font-weight="bold" font-size="12.90" fill="#e2e2e2" textLength="106.17" lengthAdjust="spacingAndGlyphs">Recent Projects</text>
<text x="805.35" y="247.50" font-family="Liberation Sans" font-weight="bold" font-size="12.90" fill="#e2e2e2" textLength="120.02" lengthAdjust="spacingAndGlyphs">Bookmarked Files</text>
<text x="816.07" y="163.20" font-family="Liberation Sans" font-size="12.90" fill="#cfcfcf" textLength="38.59" lengthAdjust="spacingAndGlyphs">task_1</text>
<text x="884.20" y="163.20" font-family="Liberation Sans" font-size="12.90" fill="#8e8d8a" textLength="94.10" lengthAdjust="spacingAndGlyphs">/home/k1 2023/</text>
<path d="M787.2 147.8 V136.8 H791.0 L792.0 138.1 H796.7 V141.3 Z" fill="#f6e4a0" stroke="#c9a042" stroke-width="0.8"/>
<path d="M787.2 148.1 L792.4 140.9 H802.0 L796.7 148.1 Z" fill="#f8e9ab" stroke="#c9a042" stroke-width="0.8" stroke-linejoin="round"/>
<path d="M787.2 182.5 V171.5 H791.0 L792.0 172.8 H796.7 V176.0 Z" fill="#f6e4a0" stroke="#c9a042" stroke-width="0.8"/>
<g fill="#f6e4a0" stroke="#c9a042" stroke-width="0.7"><rect x="793" y="167.3" width="3" height="3"/><rect x="793" y="170.3" width="3" height="3"/><rect x="796" y="170.3" width="3" height="3"/><rect x="793" y="173.3" width="3" height="3"/><rect x="796" y="173.3" width="3" height="3"/><rect x="799" y="173.3" width="3" height="3"/></g>
<path d="M787.2 182.8 L792.4 175.6 H802.0 L796.7 182.8 Z" fill="#f8e9ab" stroke="#c9a042" stroke-width="0.8" stroke-linejoin="round"/>
<path d="M787.2 199.7 V188.7 H791.0 L792.0 190.0 H796.7 V193.2 Z" fill="#f6e4a0" stroke="#c9a042" stroke-width="0.8"/>
<path d="M787.2 200.0 L792.4 192.8 H802.0 L796.7 200.0 Z" fill="#f8e9ab" stroke="#c9a042" stroke-width="0.8" stroke-linejoin="round"/>
<path d="M798.1 184.3 L799.6 187.6 L803 188 L800.4 190.3 L801.1 193.7 L798.1 192 L795.1 193.7 L795.8 190.3 L793.2 188 L796.6 187.6 Z" fill="#6aa6e4" stroke="#4f86c6" stroke-width="0.5"/>
<path d="M787.2 216.5 V205.5 H791.0 L792.0 206.8 H796.7 V210.0 Z" fill="#f6e4a0" stroke="#c9a042" stroke-width="0.8"/>
<circle cx="797.6" cy="206.2" r="5.1" fill="#f2f5fc" stroke="#a9bbdc" stroke-width="0.8"/>
<g fill="#5a78a8"><circle cx="797.6" cy="203.0" r="0.55"/><circle cx="800.8" cy="206.2" r="0.55"/><circle cx="797.6" cy="209.4" r="0.55"/><circle cx="794.4" cy="206.2" r="0.55"/></g>
<path d="M797.3 206.5 L799.5 204.2" stroke="#5a78a8" stroke-width="0.9"/>
<path d="M787.2 216.8 L792.4 209.6 H802.0 L796.7 216.8 Z" fill="#f8e9ab" stroke="#c9a042" stroke-width="0.8" stroke-linejoin="round"/>
<path d="M787.2 233.5 V222.5 H791.0 L792.0 223.8 H796.7 V227.0 Z" fill="#f6e4a0" stroke="#c9a042" stroke-width="0.8"/>
<circle cx="797.6" cy="223.2" r="5.1" fill="#f2f5fc" stroke="#a9bbdc" stroke-width="0.8"/>
<g fill="#5a78a8"><circle cx="797.6" cy="220.0" r="0.55"/><circle cx="800.8" cy="223.2" r="0.55"/><circle cx="797.6" cy="226.4" r="0.55"/><circle cx="794.4" cy="223.2" r="0.55"/></g>
<path d="M797.3 223.5 L799.5 221.2" stroke="#5a78a8" stroke-width="0.9"/>
<g fill="#f6e4a0" stroke="#c9a042" stroke-width="0.7"><rect x="790.5" y="221.5" width="3" height="3"/><rect x="790.5" y="224.5" width="3" height="3"/><rect x="793.5" y="224.5" width="3" height="3"/></g>
<path d="M787.2 233.8 L792.4 226.6 H802.0 L796.7 233.8 Z" fill="#f8e9ab" stroke="#c9a042" stroke-width="0.8" stroke-linejoin="round"/>
<path d="M787.2 250.3 V239.3 H791.0 L792.0 240.6 H796.7 V243.8 Z" fill="#f6e4a0" stroke="#c9a042" stroke-width="0.8"/>
<path d="M795.5 249.8 V237.6 Q795.5 235.3 797.8 235.3 H800.8 Q803 235.3 803 237.6 V247 L799.3 244 Z" fill="#f6e4a0" stroke="#c9a042" stroke-width="0.8"/>
<path d="M787.5 250.3 L792.5 244 H799.3 L803 247 L799.5 250.3 Z" fill="#f8e9ab" stroke="#c9a042" stroke-width="0.8" stroke-linejoin="round"/>
<path d="M783.5 363 Q783.5 360 786.5 360 H894 V380.5 Q894 385 889.5 385 H788 Q783.5 385 783.5 380.5 Z" fill="#7b7a77"/>
<text x="816.50" y="377.20" font-family="Liberation Sans" font-size="12.90" fill="#101010" textLength="65.24" lengthAdjust="spacingAndGlyphs">Workspace</text>
<path d="M797.5 364.8 H802.3 L804.8 367.3 V375.0 H797.5 Z" fill="#f7f9ff" stroke="#8fa8d4" stroke-width="0.8"/>
<path d="M794.9 366.9 H799.7 L802.2 369.4 V377.1 H794.9 Z" fill="#f7f9ff" stroke="#8fa8d4" stroke-width="0.8"/>
<path d="M792.3 369.0 H797.1 L799.6 371.5 V379.2 H792.3 Z" fill="#f7f9ff" stroke="#8fa8d4" stroke-width="0.8"/>
<g fill="#f3dc7e" stroke="#c9a448" stroke-width="0.6">
<rect x="901.6" y="366.3" width="4" height="4"/>
<rect x="901.6" y="370.3" width="4" height="4"/>
<rect x="905.6" y="370.3" width="4" height="4"/>
<rect x="901.6" y="374.3" width="4" height="4"/>
<rect x="905.6" y="374.3" width="4" height="4"/>
<rect x="909.6" y="374.3" width="4" height="4"/>
</g>
<rect x="877" y="386" width="2" height="2" fill="#8c8b87"/>
<rect x="880" y="386" width="2" height="2" fill="#8c8b87"/>
<rect x="883" y="386" width="2" height="2" fill="#8c8b87"/>
<rect x="886" y="386" width="2" height="2" fill="#8c8b87"/>
<rect x="889" y="386" width="2" height="2" fill="#8c8b87"/>
<rect x="892" y="386" width="2" height="2" fill="#8c8b87"/>
<rect x="782" y="363" width="2" height="1" fill="#2e2d2a"/>
<rect x="782" y="365" width="2" height="1" fill="#2e2d2a"/>
<rect x="782" y="367" width="2" height="1" fill="#2e2d2a"/>
<rect x="782" y="369" width="2" height="1" fill="#2e2d2a"/>
<rect x="782" y="371" width="2" height="1" fill="#2e2d2a"/>
<rect x="782" y="373" width="2" height="1" fill="#2e2d2a"/>
<rect x="782" y="375" width="2" height="1" fill="#2e2d2a"/>
<rect x="782" y="377" width="2" height="1" fill="#2e2d2a"/>
<rect x="894" y="360" width="59" height="2" fill="#9b9a97"/>
<text x="925.20" y="377.20" font-family="Liberation Sans" font-size="12.90" fill="#cfcfcf" clip-path="url(#clipP)">Proje</text>
<rect x="953" y="360" width="31" height="25" fill="#4a4946"/>
<path d="M964.3 367.8 L958.6 372.5 L964.3 377.2" stroke="#64635f" stroke-width="1.1" fill="none"/>
<path d="M973.8 367.8 L979.4 372.5 L973.8 377.2" stroke="#dcdcdc" stroke-width="1.2" fill="none"/>
<text x="786.88" y="404.20" font-family="Liberation Sans" font-size="12.90" fill="#d3d3d3" textLength="62.26" lengthAdjust="spacingAndGlyphs">Inspector</text>
<path d="M955.7 398.7 h7.1 l-3.55 4.1 z" fill="#d5d5d5"/>
<path d="M971 397 L978.8 404 M978.8 397 L971 404" stroke="#e6e6e6" stroke-width="1.4"/>
<path d="M784 432 V416 Q784 412 788 412 H965 Q969 412 969 416 V432 Z" fill="#4d4c49"/>
<rect x="883" y="412" width="1" height="20" fill="#3a3936"/>
<text x="819.37" y="426.90" font-family="Liberation Sans" font-weight="bold" font-size="12.90" fill="#e0e0e0" textLength="30.63" lengthAdjust="spacingAndGlyphs">Type</text>
<text x="908.76" y="426.90" font-family="Liberation Sans" font-weight="bold" font-size="12.90" fill="#e0e0e0" textLength="36.76" lengthAdjust="spacingAndGlyphs">Value</text>
<rect x="784" y="433" width="185" height="21" fill="#4b4a47"/>
<text x="785.56" y="447.60" font-family="Liberation Sans" font-size="13.40" fill="#d8d8d8" textLength="38.27" lengthAdjust="spacingAndGlyphs">Binary</text>
<text x="885.79" y="447.60" font-family="Liberation Sans" font-size="13.40" fill="#d8d8d8" textLength="60.91" lengthAdjust="spacingAndGlyphs">00000000</text>
<text x="786.08" y="468.60" font-family="Liberation Sans" font-size="13.40" fill="#d8d8d8" textLength="71.93" lengthAdjust="spacingAndGlyphs">Signed Byte</text>
<text x="885.76" y="468.60" font-family="Liberation Sans" font-size="13.40" fill="#d8d8d8" textLength="8.01" lengthAdjust="spacingAndGlyphs">0</text>
<text x="785.70" y="489.60" font-family="Liberation Sans" font-size="13.40" fill="#d8d8d8" textLength="87.12" lengthAdjust="spacingAndGlyphs">Unsigned Byte</text>
<text x="885.76" y="489.60" font-family="Liberation Sans" font-size="13.40" fill="#d8d8d8" textLength="8.01" lengthAdjust="spacingAndGlyphs">0</text>
<text x="786.08" y="510.60" font-family="Liberation Sans" font-size="13.40" fill="#d8d8d8" textLength="76.10" lengthAdjust="spacingAndGlyphs">Signed Short</text>
<text x="885.76" y="510.60" font-family="Liberation Sans" font-size="13.40" fill="#d8d8d8" textLength="8.01" lengthAdjust="spacingAndGlyphs">0</text>
<text x="785.71" y="531.60" font-family="Liberation Sans" font-size="13.40" fill="#d8d8d8" textLength="91.16" lengthAdjust="spacingAndGlyphs">Unsigned Short</text>
<text x="885.76" y="531.60" font-family="Liberation Sans" font-size="13.40" fill="#d8d8d8" textLength="8.01" lengthAdjust="spacingAndGlyphs">0</text>
<text x="786.08" y="552.60" font-family="Liberation Sans" font-size="13.40" fill="#d8d8d8" textLength="60.24" lengthAdjust="spacingAndGlyphs">Signed Int</text>
<text x="885.76" y="552.60" font-family="Liberation Sans" font-size="13.40" fill="#d8d8d8" textLength="8.01" lengthAdjust="spacingAndGlyphs">0</text>
<text x="785.70" y="573.60" font-family="Liberation Sans" font-size="13.40" fill="#d8d8d8" textLength="75.00" lengthAdjust="spacingAndGlyphs">Unsigned Int</text>
<text x="885.76" y="573.60" font-family="Liberation Sans" font-size="13.40" fill="#d8d8d8" textLength="8.01" lengthAdjust="spacingAndGlyphs">0</text>
<text x="786.08" y="594.60" font-family="Liberation Sans" font-size="13.40" fill="#d8d8d8" textLength="74.89" lengthAdjust="spacingAndGlyphs">Signed Int64</text>
<text x="885.78" y="594.60" font-family="Liberation Sans" font-size="13.40" fill="#d8d8d8" textLength="84.49" lengthAdjust="spacingAndGlyphs" clip-path="url(#clipI)">85899345920</text>
<text x="785.70" y="615.60" font-family="Liberation Sans" font-size="13.40" fill="#d8d8d8" textLength="90.06" lengthAdjust="spacingAndGlyphs">Unsigned Int64</text>
<text x="885.78" y="615.60" font-family="Liberation Sans" font-size="13.40" fill="#d8d8d8" textLength="84.49" lengthAdjust="spacingAndGlyphs" clip-path="url(#clipI)">85899345920</text>
<rect x="971" y="412" width="13" height="212" fill="#575755"/>
<rect x="971" y="412" width="1" height="212" fill="#5e5e5c"/>
<rect x="971.5" y="412.5" width="12" height="13" fill="#565654" stroke="#6e6e6c" stroke-width="1"/>
<path d="M973.4 421.0 L977.5 416.8 L981.6 421.0 Z" fill="#c4c4c4"/>
<rect x="971" y="426" width="13" height="1" fill="#2c2c2a"/>
<rect x="971.5" y="426.5" width="12" height="68.0" fill="#5b5b59" stroke="#707070" stroke-width="1"/>
<rect x="971" y="495" width="13" height="1" fill="#2e2e2c"/>
<rect x="971" y="609" width="13" height="1" fill="#2c2c2a"/>
<rect x="971.5" y="610.5" width="12" height="13" fill="#565654" stroke="#6e6e6c" stroke-width="1"/>
<path d="M973.4 614.8 L977.5 619.0 L981.6 614.8 Z" fill="#c4c4c4"/>
<path d="M784 627 Q784 624 787 624 H884 V644.5 Q884 649 879.5 649 H788.5 Q784 649 784 644.5 Z" fill="#7b7a77"/>
<text x="815.29" y="641.20" font-family="Liberation Sans" font-size="12.90" fill="#101010" textLength="56.93" lengthAdjust="spacingAndGlyphs">Inspector</text>
<path d="M799.5 629.3 L792 637.3 H797 L793.2 642.8 L803.3 634 H798.2 L802 629.3 Z" fill="#f4d468" stroke="#c9a448" stroke-width="0.5"/>
<path d="M894.5 634.5 V641.3 H899 M894.5 637.3 H899" fill="none" stroke="#6aa0d8" stroke-width="1" stroke-dasharray="1 1"/>
<g fill="#f3dc7e" stroke="#c9a448" stroke-width="0.6"><rect x="891.8" y="629.5" width="4.5" height="4.5"/><rect x="899.3" y="633.6" width="4.5" height="4.5"/><rect x="899.3" y="638.7" width="4.5" height="4.5"/></g>
<rect x="884" y="624" width="69" height="2" fill="#9b9a97"/>
<text x="916.50" y="641.20" font-family="Liberation Sans" font-size="12.90" fill="#cfcfcf" clip-path="url(#clipV)">Variab</text>
<rect x="953" y="624" width="31" height="25" fill="#4a4946"/>
<path d="M964.3 632 L958.6 636.7 L964.3 641.4" stroke="#64635f" stroke-width="1.1" fill="none"/>
<path d="M973.8 632 L979.4 636.7 L973.8 641.4" stroke="#dcdcdc" stroke-width="1.2" fill="none"/>
<text x="7.54" y="664.60" font-family="Liberation Sans" font-size="12.90" fill="#d5d5d5" textLength="141.24" lengthAdjust="spacingAndGlyphs">Opened file &#x27;/home/kali/</text>
<text x="173.40" y="664.60" font-family="Liberation Sans" font-size="12.90" fill="#d5d5d5" textLength="181.69" lengthAdjust="spacingAndGlyphs">/BUUCTF WEEK1 2023/task_1&#x27;.</text>
<g transform="translate(149.60 656.50) scale(1.140 1.060)" stroke="#d5d5d5" stroke-width="1.35" fill="none">
<path d="M4.7 0.3 v1.8 M1.2 2.1 h7.6 M2.2 2.1 v3.2 h5.6 v-3.2 M2.2 3.7 h5.6 M0.3 6.6 h9.4 M5 5.3 v4.7 M4.6 7.1 l-4.1 2.6 M5.4 7.1 l4.1 2.6"/>
<path d="M11.2 0.6 h9.6 M15.9 0.6 v1.7 M11.8 2.5 h8.8 v7.3 h-8.8 Z M14.3 2.5 v7.3 M18 2.5 v7.3 M14.3 5 h3.7 M14.3 7.4 h3.7"/>
</g>
<path d="M913 655.6 H910.6 V664.2 H915 M918 655.6 H920.4 V659.5" fill="none" stroke="#d0d0d0" stroke-width="1.1"/>
<path d="M913.3 656.8 L914 654.6 H917 L917.7 656.8 Z" fill="none" stroke="#d0d0d0" stroke-width="1"/>
<path d="M915.8 666.3 V660 H919 L921.3 662.3 V666.3 Z" fill="none" stroke="#d0d0d0" stroke-width="1.1"/>
<text x="581.26" y="664.70" font-family="Liberation Sans" font-size="12.90" fill="#d5d5d5" textLength="64.07" lengthAdjust="spacingAndGlyphs">Pos: 0 [0h]</text>
<text x="653.50" y="664.70" font-family="Liberation Sans" font-size="12.90" fill="#d5d5d5" textLength="51.77" lengthAdjust="spacingAndGlyphs">Val: 0 0h</text>
<text x="713.56" y="664.70" font-family="Liberation Sans" font-size="12.90" fill="#d5d5d5" textLength="55.16" lengthAdjust="spacingAndGlyphs">Size: 424</text>
<text x="795.47" y="664.70" font-family="Liberation Sans" font-size="12.90" fill="#d5d5d5" textLength="23.48" lengthAdjust="spacingAndGlyphs">Hex</text>
<text x="828.80" y="664.70" font-family="Liberation Sans" font-size="12.90" fill="#d5d5d5" textLength="28.10" lengthAdjust="spacingAndGlyphs">ANSI</text>
<text x="864.81" y="664.70" font-family="Liberation Sans" font-size="12.90" fill="#d5d5d5" textLength="16.59" lengthAdjust="spacingAndGlyphs">LIT</text>
<text x="930.62" y="664.70" font-family="Liberation Sans" font-size="12.90" fill="#d5d5d5" textLength="26.08" lengthAdjust="spacingAndGlyphs">OVR</text>
<rect x="981.3" y="659.5" width="2" height="2" fill="#8a8985"/>
<rect x="978.3" y="662.5" width="2" height="2" fill="#8a8985"/>
<rect x="981.3" y="662.5" width="2" height="2" fill="#8a8985"/>
<rect x="975.3" y="665.5" width="2" height="2" fill="#8a8985"/>
<rect x="978.3" y="665.5" width="2" height="2" fill="#8a8985"/>
<rect x="981.3" y="665.5" width="2" height="2" fill="#8a8985"/>
<rect x="972.3" y="668.5" width="2" height="2" fill="#8a8985"/>
<rect x="975.3" y="668.5" width="2" height="2" fill="#8a8985"/>
<rect x="978.3" y="668.5" width="2" height="2" fill="#8a8985"/>
<rect x="981.3" y="668.5" width="2" height="2" fill="#8a8985"/></svg>
</body></html>
